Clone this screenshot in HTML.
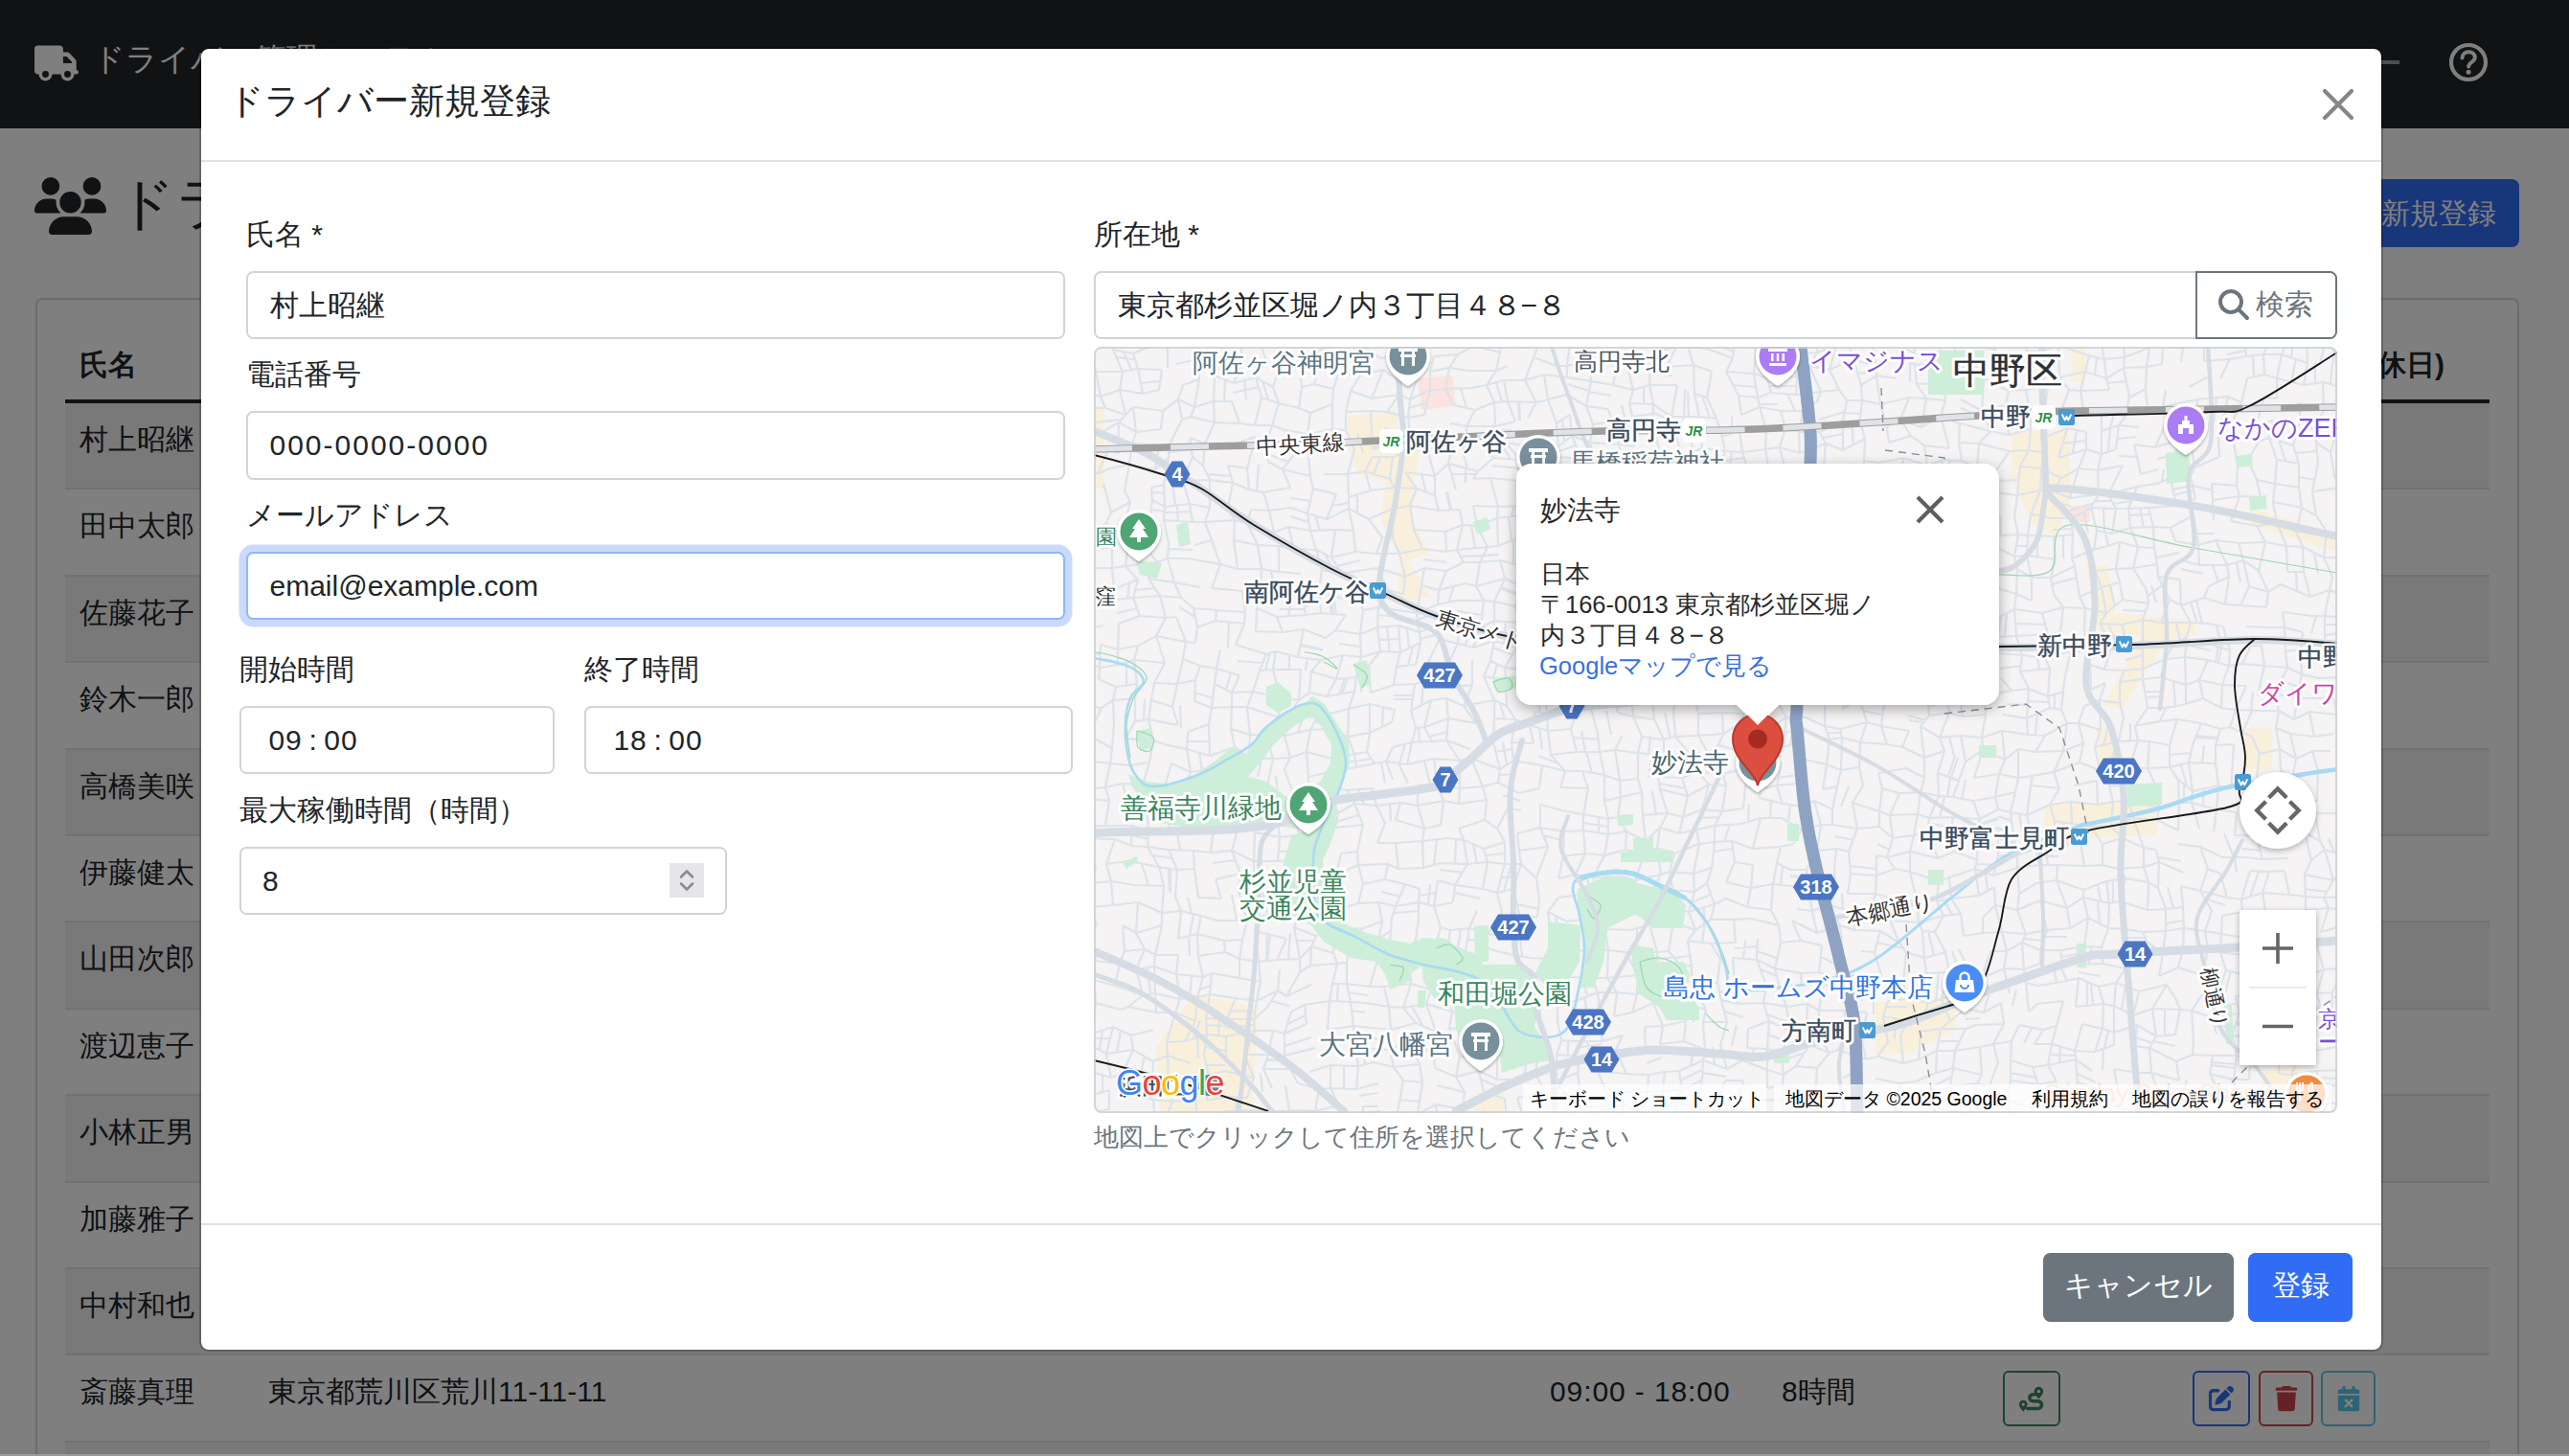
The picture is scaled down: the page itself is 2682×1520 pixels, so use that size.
<!DOCTYPE html>
<html lang="ja"><head><meta charset="utf-8"><title>ドライバー管理</title>
<style>
html{font-size:calc(100vw / 26.82)}
*{box-sizing:border-box}
html,body{margin:0;padding:0;background:#808080;overflow:hidden}
body{font-family:"Liberation Sans",sans-serif;color:#212529;font-size:.3rem;line-height:.45rem}
#page{position:relative;width:26.82rem;height:15.2rem;overflow:hidden;background:#fff}
.abs{position:absolute}
.t{position:absolute;white-space:nowrap;line-height:.45rem;font-size:.3rem}
/* ---------- underlying page ---------- */
#nav{position:absolute;left:0;top:0;width:26.82rem;height:1.34rem;background:#212529}
#brand{left:.97rem;top:.39rem;font-size:.33rem;color:#fff;line-height:.46rem}
#h2{left:1.22rem;top:1.68rem;font-size:.6rem;line-height:.9rem;font-weight:500}
#newbtn{position:absolute;left:23.8rem;top:1.87rem;width:2.5rem;height:.71rem;background:#316cf4;border-radius:.075rem;color:#fff}
#newbtn span{position:absolute;left:1.06rem;top:.13rem;line-height:.45rem;font-size:.3rem;white-space:nowrap}
#card{position:absolute;left:.37rem;top:3.11rem;width:25.93rem;height:13rem;border:.02rem solid rgba(0,0,0,.15);border-radius:.075rem;background:#fff}
#thead{position:absolute;left:.68rem;top:3.43rem;width:25.31rem;height:.78rem;border-bottom:.04rem solid #212529;font-weight:bold}
.row{position:absolute;left:.68rem;width:25.31rem;height:.904rem;border-bottom:.02rem solid #dee2e6}
.row.s{background:rgba(0,0,0,.05)}
.row .t{top:.15rem}
.bt{position:absolute;top:.16rem;height:.576rem;border:.02rem solid;border-radius:.06rem}
.bt svg{position:absolute;left:50%;top:50%;transform:translate(-50%,-50%)}
#ov{position:absolute;left:0;top:0;width:26.82rem;height:15.2rem;background:rgba(0,0,0,.5)}
/* ---------- modal ---------- */
#modal{position:absolute;left:2.08rem;top:.49rem;width:22.8rem;height:13.62rem;background:#fff;border:.02rem solid rgba(0,0,0,.2);border-radius:.1rem;background-clip:padding-box}
#mh{position:absolute;left:2.1rem;top:.5rem;width:22.76rem;height:1.19rem;border-bottom:.02rem solid #dee2e6}
#mtitle{left:2.38rem;top:.78rem;font-size:.368rem;line-height:.56rem;font-weight:500}
#mf{position:absolute;left:2.1rem;top:12.77rem;width:22.76rem;height:.02rem;background:#dee2e6}
.lbl{position:absolute;white-space:nowrap;font-size:.3rem;line-height:.45rem}
.in{position:absolute;height:.715rem;border:.02rem solid #cfd4da;border-radius:.075rem;background:#fff;font-size:.3rem;line-height:.45rem;padding:.1125rem .225rem;white-space:nowrap;overflow:hidden}
.in.f{border-color:#90b6f8;box-shadow:0 0 0 .075rem rgba(49,108,244,.25)}
.btn{position:absolute;height:.715rem;border-radius:.075rem;color:#fff;font-size:.3rem;line-height:.45rem;padding:.1125rem 0;text-align:center;white-space:nowrap}
#help{left:11.42rem;top:11.68rem;font-size:.257rem;line-height:.39rem;color:#6c757d}
#map{position:absolute;left:11.42rem;top:3.62rem;width:12.98rem;height:8rem;border-radius:.08rem;overflow:hidden;background:#f5f3f3;border:0}
#map svg{position:absolute;left:0;top:0}
#mapborder{position:absolute;left:11.42rem;top:3.62rem;width:12.98rem;height:8rem;border-radius:.08rem;border:.02rem solid rgba(205,208,212,.85);pointer-events:none}
</style></head>
<body>
<div id="page">
<div id="nav"><svg class="abs" style="width:0.46rem;height:0.38rem;left:.36rem;top:.47rem" viewBox="0 0 640 512"><path fill="#fff" d="M48 0C21.5 0 0 21.5 0 48V368c0 26.500 21.500 48 48 48H64c0 53 43 96 96 96s96-43 96-96H384c0 53 43 96 96 96s96-43 96-96h32c17.700 0 32-14.300 32-32s-14.300-32-32-32V288 256 237.300c0-17-6.700-33.300-18.700-45.300L512 114.700c-12-12-28.300-18.700-45.300-18.700H416V48c0-26.500-21.500-48-48-48H48zM416 160h50.700L544 237.300V256H416V160zM112 416a48 48 0 1 1 96 0 48 48 0 1 1 -96 0zm368-48a48 48 0 1 1 0 96 48 48 0 1 1 0-96z"/></svg><div class="t" id="brand">ドライバー管理システム</div><div class="abs" style="left:24.6rem;top:.63rem;width:.45rem;height:.04rem;background:rgba(255,255,255,.55)"></div><svg class="abs" style="width:0.44rem;height:0.44rem;left:25.55rem;top:.43rem" viewBox="0 0 44 44"><circle cx="22" cy="22" r="18" fill="none" stroke="#fff" stroke-width="4.200"/><path d="M15.500 17.500c0-3.800 3-6.300 6.700-6.300s6.600 2.400 6.600 5.800c0 4.500-6.600 5-6.600 9.500" fill="none" stroke="#fff" stroke-width="4" stroke-linecap="round" stroke-linejoin="round"/><circle cx="22.100" cy="32.300" r="2.500" fill="#fff"/></svg></div>
<svg class="abs" style="width:0.75rem;height:0.6rem;left:.36rem;top:1.85rem" viewBox="0 0 640 512"><path fill="#212529" d="M144 0a80 80 0 1 1 0 160A80 80 0 1 1 144 0zM512 0a80 80 0 1 1 0 160A80 80 0 1 1 512 0zM0 298.700C0 239.800 47.800 192 106.700 192h42.700c15.900 0 31 3.500 44.600 9.700c-1.300 7.200-1.900 14.700-1.900 22.300c0 38.200 16.800 72.500 43.300 96c-.2 0-.4 0-.7 0H21.300C9.600 320 0 310.400 0 298.700zM405.300 320c-.2 0-.4 0-.7 0c26.600-23.500 43.300-57.800 43.300-96c0-7.600-.7-15-1.900-22.300c13.600-6.300 28.700-9.700 44.600-9.700h42.700C592.200 192 640 239.800 640 298.700c0 11.800-9.600 21.300-21.300 21.300H405.300zM224 224a96 96 0 1 1 192 0 96 96 0 1 1 -192 0zM128 485.300C128 411.700 187.700 352 261.300 352H378.700C452.300 352 512 411.700 512 485.300c0 14.700-11.900 26.700-26.700 26.700H154.700c-14.700 0-26.700-11.900-26.700-26.700z"/></svg>
<div class="t" id="h2">ドライバー管理</div>
<div id="newbtn"><span>新規登録</span></div>
<div id="card"></div>
<div id="thead"><div class="t" style="left:.15rem;top:.15rem">氏名</div><div class="t" style="right:.47rem;top:.15rem">稼働日(平日/休日)</div></div>
<div class="row s" style="top:4.21rem"><div class="t" style="left:.15rem">村上昭継</div></div>
<div class="row" style="top:5.114rem"><div class="t" style="left:.15rem">田中太郎</div></div>
<div class="row s" style="top:6.018rem"><div class="t" style="left:.15rem">佐藤花子</div></div>
<div class="row" style="top:6.922rem"><div class="t" style="left:.15rem">鈴木一郎</div></div>
<div class="row s" style="top:7.826rem"><div class="t" style="left:.15rem">高橋美咲</div></div>
<div class="row" style="top:8.73rem"><div class="t" style="left:.15rem">伊藤健太</div></div>
<div class="row s" style="top:9.634rem"><div class="t" style="left:.15rem">山田次郎</div></div>
<div class="row" style="top:10.538rem"><div class="t" style="left:.15rem">渡辺恵子</div></div>
<div class="row s" style="top:11.442rem"><div class="t" style="left:.15rem">小林正男</div></div>
<div class="row" style="top:12.346rem"><div class="t" style="left:.15rem">加藤雅子</div></div>
<div class="row s" style="top:13.25rem"><div class="t" style="left:.15rem">中村和也</div></div>
<div class="row" style="top:14.154rem"><div class="t" style="left:.15rem">斎藤真理</div><div class="t" style="left:2.12rem">東京都荒川区荒川11-11-11</div><div class="t" style="left:15.5rem;letter-spacing:.009rem">09:00 - 18:00</div><div class="t" style="left:17.92rem">8時間</div><div class="bt" style="left:20.23rem;width:.6rem;border-color:#408558"><svg style="width:0.28rem;height:0.28rem" viewBox="0 0 32 32"><g fill="none" stroke="#408558" stroke-width="4" stroke-linecap="round"><path d="M11 28h12.500a4.500 4.500 0 0 0 0-9h-6a4 4 0 0 1 0-8H20"/></g><path fill="#408558" d="M24.500 2a5.500 5.500 0 0 1 5.500 5.500c0 3.500-5.500 9-5.500 9s-5.500-5.500-5.500-9A5.500 5.500 0 0 1 24.500 2zm0 3.500a2 2 0 1 0 0 4 2 2 0 0 0 0-4zM6 18a5 5 0 0 1 5 5c0 3.200-5 8.500-5 8.500S1 26.200 1 23a5 5 0 0 1 5-5zm0 3.200a1.800 1.800 0 1 0 0 3.600 1.800 1.800 0 0 0 0-3.600z"/></svg></div><div class="bt" style="left:22.21rem;width:.6rem;border-color:#316cf4"><svg style="width:0.265rem;height:0.265rem" viewBox="0 0 512 512"><path fill="#316cf4" d="M471.600 21.700c-21.900-21.900-57.300-21.900-79.200 0L362.300 51.700l97.900 97.900 30.100-30.100c21.900-21.900 21.900-57.300 0-79.200L471.600 21.700zm-299.200 220c-6.100 6.100-10.800 13.600-13.500 21.900l-29.600 88.800c-2.900 8.600-.6 18.100 5.800 24.600s15.900 8.700 24.600 5.800l88.800-29.600c8.200-2.700 15.700-7.400 21.900-13.500L437.700 172.300 339.700 74.300 172.400 241.700zM96 64C43 64 0 107 0 160V416c0 53 43 96 96 96H352c53 0 96-43 96-96V320c0-17.700-14.300-32-32-32s-32 14.300-32 32v96c0 17.700-14.300 32-32 32H96c-17.700 0-32-14.300-32-32V160c0-17.700 14.300-32 32-32h96c17.700 0 32-14.300 32-32s-14.300-32-32-32H96z"/></svg></div><div class="bt" style="left:22.9rem;width:.57rem;border-color:#cb444a"><svg style="width:0.23rem;height:0.265rem" viewBox="0 0 448 512"><path fill="#cb444a" d="M135.200 17.700L128 32H32C14.300 32 0 46.300 0 64S14.300 96 32 96H416c17.700 0 32-14.300 32-32s-14.300-32-32-32H320l-7.200-14.300C307.400 6.800 296.300 0 284.200 0H163.800c-12.100 0-23.200 6.800-28.600 17.700zM416 128H32L53.200 467c1.600 25.300 22.600 45 47.900 45H346.900c25.300 0 46.300-19.700 47.900-45L416 128z"/></svg></div><div class="bt" style="left:23.55rem;width:.57rem;border-color:#5cc7ec"><svg style="width:0.23rem;height:0.265rem" viewBox="0 0 448 512"><path fill="#5cc7ec" d="M128 0c17.700 0 32 14.300 32 32V64H288V32c0-17.700 14.300-32 32-32s32 14.300 32 32V64h48c26.500 0 48 21.500 48 48v48H0V112C0 85.500 21.500 64 48 64H96V32c0-17.700 14.300-32 32-32zM0 192H448V464c0 26.500-21.500 48-48 48H48c-26.500 0-48-21.500-48-48V192zM305 305c9.400-9.400 9.400-24.600 0-33.900s-24.600-9.400-33.900 0l-47 47-47-47c-9.400-9.400-24.600-9.400-33.900 0s-9.400 24.600 0 33.900l47 47-47 47c-9.400 9.400-9.400 24.600 0 33.900s24.600 9.400 33.900 0l47-47 47 47c9.400 9.400 24.600 9.400 33.900 0s9.400-24.600 0-33.900l-47-47 47-47z"/></svg></div></div>
<div class="row s" style="top:15.058rem"><div class="t" style="left:.15rem">木村拓也</div></div>
<div id="ov"></div>
<div id="bstrip" class="abs" style="left:0;top:15.18rem;width:26.82rem;height:.02rem;background:#9a9a9a"></div>
<div id="modal"></div>
<div id="mh"></div>
<div class="t" id="mtitle">ドライバー新規登録</div>
<svg class="abs" style="width:0.4rem;height:0.4rem;left:24.21rem;top:.89rem" viewBox="0 0 40 40"><path d="M6 6L34 34M34 6L6 34" stroke="#858585" stroke-width="4.200" stroke-linecap="round" fill="none"/></svg>
<div class="lbl" style="left:2.57rem;top:2.215rem">氏名 *</div>
<div class="in" style="left:2.57rem;top:2.825rem;width:8.55rem">村上昭継</div>
<div class="lbl" style="left:2.57rem;top:3.68rem">電話番号</div>
<div class="in" style="left:2.57rem;top:4.29rem;width:8.55rem;letter-spacing:.02rem">000-0000-0000</div>
<div class="lbl" style="left:2.57rem;top:5.145rem">メールアドレス</div>
<div class="in f" style="left:2.57rem;top:5.755rem;width:8.55rem">email@example.com</div>
<div class="lbl" style="left:2.495rem;top:6.76rem">開始時間</div>
<div class="lbl" style="left:6.095rem;top:6.76rem">終了時間</div>
<div class="in" style="left:2.495rem;top:7.365rem;width:3.29rem;padding-left:.29rem;word-spacing:-.025rem;letter-spacing:.009rem">09 : 00</div>
<div class="in" style="left:6.095rem;top:7.365rem;width:5.1rem;padding-left:.29rem;word-spacing:-.025rem;letter-spacing:.009rem">18 : 00</div>
<div class="lbl" style="left:2.495rem;top:8.225rem">最大稼働時間（時間）</div>
<div class="in" style="left:2.495rem;top:8.835rem;width:5.09rem">8</div>
<div class="abs" style="left:6.99rem;top:9.01rem;width:.36rem;height:.36rem;background:#e6e5ea"></div><svg class="abs" style="width:0.36rem;height:0.36rem;left:6.99rem;top:9.01rem" viewBox="0 0 36 36"><path d="M12 14.500l6-6 6 6M12 21.500l6 6 6-6" fill="none" stroke="#8c8a94" stroke-width="2.600" stroke-linecap="round" stroke-linejoin="round"/></svg>
<div class="lbl" style="left:11.42rem;top:2.215rem">所在地 *</div>
<div class="in" style="left:11.42rem;top:2.825rem;width:11.52rem;border-radius:.075rem 0 0 .075rem">東京都杉並区堀ノ内３丁目４８−８</div>
<div class="abs" style="left:22.92rem;top:2.825rem;width:1.48rem;height:.715rem;border:.02rem solid #6e757c;border-radius:0 .075rem .075rem 0;background:#fff"></div>
<svg class="abs" style="width:0.32rem;height:0.32rem;left:23.16rem;top:3.02rem" viewBox="0 0 512 512"><path fill="#6c757d" d="M416 208c0 45.900-14.900 88.300-40 122.700L502.600 457.400c12.500 12.500 12.500 32.800 0 45.300s-32.800 12.500-45.300 0L330.700 376c-34.400 25.200-76.800 40-122.700 40C93.100 416 0 322.900 0 208S93.100 0 208 0S416 93.100 416 208zM208 352a144 144 0 1 0 0-288 144 144 0 1 0 0 288z"/></svg>
<div class="t" style="left:23.55rem;top:2.95rem;color:#6e757c">検索</div>
<div id="map"><svg style="width:12.98rem;height:8rem" viewBox="1142 362 1298 800" font-family="'Liberation Sans',sans-serif"><defs><filter id="ps" x="-30%" y="-30%" width="160%" height="170%"><feDropShadow dx="0" dy="2" stdDeviation="1.500" flood-color="#000" flood-opacity=".3"/></filter><filter id="cs" x="-30%" y="-30%" width="160%" height="160%"><feDropShadow dx="0" dy="2" stdDeviation="3" flood-color="#000" flood-opacity=".3"/></filter><filter id="iw" x="-10%" y="-10%" width="120%" height="130%"><feDropShadow dx="0" dy="4" stdDeviation="7" flood-color="#000" flood-opacity=".32"/></filter></defs><rect x="1142" y="362" width="1298" height="800" fill="#f5f3f3"/><path d="M1407 435L1459 429 1459 455 1476 455 1482 478 1476 502 1473 542 1493 579 1470 585 1493 623 1459 628 1462 585 1441 542 1447 502 1418 496 1407 467Z" fill="#f9f0dc"/><path d="M1142 424L1153 424 1153 510 1142 510Z" fill="#f9f0dc"/><path d="M2163 362L2177 362 2177 398 2163 398Z" fill="#f9f0dc"/><path d="M2100 452L2160 448 2162 520 2146 560 2120 545 2100 500Z" fill="#f9f0dc"/><path d="M2348 530L2440 558 2440 576 2348 548Z" fill="#f9f0dc"/><path d="M2178 590L2200 590 2212 660 2190 662Z" fill="#f9f0dc"/><path d="M2210 640L2292 648 2292 662 2262 668 2215 740 2196 736 2236 664 2210 660Z" fill="#f9f0dc"/><path d="M2134 840L2250 835 2252 872 2134 876Z" fill="#f9f0dc"/><path d="M2344 760L2372 760 2372 803 2344 803Z" fill="#f9f0dc"/><path d="M2188 760L2208 760 2212 800 2192 800Z" fill="#f9f0dc"/><path d="M1958 1047L2041 1040 2041 1075 1990 1100 1958 1100Z" fill="#f9f0dc"/><path d="M1207 1093L1245 1038 1314 1052 1307 1160 1211 1160Z" fill="#f9f0dc"/><path d="M1540 1140L1570 1140 1570 1160 1540 1160Z" fill="#f9f0dc"/><path d="M2360 1120L2400 1110 2410 1150 2370 1160Z" fill="#f9f0dc"/><path d="M1480 395L1516 392 1520 424 1484 428Z" fill="#fbe3df"/><path d="M2160 528L2182 528 2182 545 2160 545Z" fill="#fbe3df"/><path d="M1119 343L1145 342L1165 344L1181 344L1202 341L1225 334L1251 341L1269 331L1297 340L1317 333L1344 329L1364 334L1375 334M1398 346L1418 345L1444 345L1464 342L1478 344L1506 347L1522 347M1544 341L1569 344L1582 340L1605 342L1628 332L1651 329L1664 337L1681 335M1700 339L1729 340M1751 339L1769 345L1788 346L1812 353L1828 350L1843 350L1872 353L1895 341M1911 344L1927 338L1951 332L1971 338L1993 331L2018 339L2036 334L2064 342L2089 344L2104 341L2127 349L2157 342L2168 344L2191 348L2217 344M2232 345M2258 345L2287 344L2303 340L2327 331L2351 339L2372 338L2387 333L2404 337M2424 331L2447 335M1122 363L1139 364M1162 365L1183 369L1212 357L1229 357L1252 352L1279 362M1296 355L1312 350L1336 353M1363 354L1373 367L1400 359L1421 360L1441 374L1466 371M1478 367M1497 372L1522 370L1539 361L1566 368M1586 363L1606 360L1619 356L1640 349L1656 352L1680 359L1709 358M1730 367L1750 362L1762 362L1782 364L1809 374M1833 369M1851 372L1865 369L1897 368L1917 361L1931 363M1955 361L1985 354L1999 361L2025 351L2039 352L2071 363L2083 365M2116 366L2130 367L2149 361L2181 371L2197 375L2218 373L2244 363M2258 362L2279 363L2301 358L2320 362L2344 355L2368 360L2386 361L2408 357L2429 352M2448 357M1120 394L1144 388L1172 388L1188 385L1213 386M1228 380L1251 375M1278 376M1296 379M1322 376M1338 378L1357 383L1377 383L1397 391L1420 392L1444 386L1459 396L1483 385M1493 388L1513 384L1533 387L1562 387L1574 382M1601 373L1625 382L1636 382L1659 376L1688 382L1698 379L1723 381M1740 383L1768 381L1787 388M1802 388L1831 390L1845 395L1876 393L1889 382L1910 386L1935 375L1959 383L1986 373L1999 381L2026 379M2042 372L2072 379L2085 388L2114 389L2129 392L2150 394L2177 388L2199 395L2217 384L2241 383L2257 380M2277 378M2301 377L2328 375L2345 372L2363 370L2382 370L2409 379M2422 380M2452 378M1132 410L1149 414L1169 407L1193 411L1210 407M1235 402L1252 396M1268 392L1288 400L1311 394L1329 404M1359 404L1372 401L1392 406M1410 408L1432 416L1461 412L1472 417L1493 407L1509 406L1536 405L1552 402L1570 397L1592 397L1612 391L1636 394L1661 398L1684 402L1705 407L1722 402L1751 402M1769 411L1782 415M1815 413L1835 415L1849 410L1875 412L1901 409L1920 407M1943 402L1959 392L1980 395M2001 401L2029 400L2052 402L2071 395L2097 408L2115 407L2138 403M2160 407L2172 408L2202 407M2223 415L2240 406M2261 407M2285 404L2304 394M2318 395M2346 395L2364 391L2377 395L2405 402L2425 399L2443 404M1127 426L1154 426L1175 433L1183 425L1214 429L1230 417L1247 425L1267 419L1286 419M1317 415L1335 421L1356 426L1368 431L1391 422M1405 430L1431 429L1448 430L1470 436L1487 433M1518 423L1540 428L1560 420L1574 419L1604 420L1616 417L1636 412L1656 424L1679 427M1701 421L1726 422L1745 435L1774 435L1792 437M1818 433L1837 425L1859 429L1882 429L1897 419M1928 418L1944 418L1963 422L1993 415L2011 416L2031 418M2047 417L2069 429L2094 423L2120 435L2135 426M2153 426L2175 427L2194 428L2219 435M2242 426L2258 425L2278 420L2294 417L2326 414L2340 420M2364 415L2377 416M2399 421L2426 428L2445 420M1120 455L1152 450L1168 441L1186 451L1212 448M1234 438L1243 435L1268 441L1294 442L1310 444L1328 444L1342 449L1365 453L1391 448L1405 449M1432 455M1445 447L1472 453L1491 447M1514 442L1531 445L1561 445L1582 440M1595 436M1625 442L1639 433M1663 443L1683 440L1708 451L1725 442L1748 449L1774 448M1798 456L1816 449M1844 449M1864 447L1878 451L1900 451L1924 439M1942 440L1970 445L1984 438L2006 446L2026 435L2046 442L2078 450L2097 454L2120 448M2131 458L2158 447L2178 451M2194 450L2212 444L2233 446M2262 440L2282 439L2294 445M2321 439L2331 439M2355 445L2373 439M2402 437L2416 450L2442 442M1118 467L1150 467L1167 473L1182 463L1210 465L1221 464M1242 457L1258 463M1290 463L1311 456M1322 464L1352 473L1365 466L1386 472M1414 469M1433 477L1454 477L1473 470L1490 469L1517 463L1531 469M1553 458L1572 462L1598 466L1627 466L1641 455L1660 462L1690 464L1706 466M1733 472L1756 476L1777 468L1801 471L1819 472L1843 469L1858 467L1879 473L1906 463L1924 470L1947 458M1972 462L1995 455L2009 465L2035 468M2045 462L2066 463L2098 471L2118 470L2137 473M2149 478L2178 469L2194 474L2209 469M2228 464L2250 467L2275 459L2287 459M2316 456L2331 456L2358 461L2369 457L2394 465M2418 462L2433 472M1120 490L1139 497L1159 489L1179 485L1206 490L1220 478M1245 477L1256 486M1282 486L1302 489M1324 482L1339 490L1368 497M1382 495L1407 495L1425 492L1451 500M1467 493L1498 497L1512 484L1543 492L1559 478L1587 480L1608 483L1629 477L1651 479L1667 489L1695 482L1709 488L1734 490L1751 490M1780 500M1793 496L1824 488L1846 488M1864 491L1886 486L1904 487L1925 486M1946 481L1961 483L1988 478L2012 486L2028 480L2048 481L2064 488L2084 491M2109 487L2131 489L2152 499L2170 489L2190 491L2216 486M2235 495L2253 490M2267 490L2291 488L2317 477M2336 487L2347 480M2377 480L2400 484M2420 484M2437 497M1114 510L1138 509M1152 505M1174 512M1202 509L1215 506M1235 502L1263 501L1287 504L1304 511L1319 514L1347 509M1371 510L1395 516M1408 519L1431 512L1456 509L1479 510L1498 517M1520 511M1538 500L1556 499L1586 502L1606 507L1623 499L1652 497M1665 504L1688 506L1711 512L1737 509L1759 515L1774 522L1797 511M1816 517L1847 517L1861 508L1877 510M1905 504L1926 503L1950 506L1962 507L1979 503L2004 500L2020 509L2039 509L2072 506L2082 514L2106 517L2130 512L2144 513L2161 520L2191 516M2201 516L2231 508L2252 505L2266 499L2287 497M2309 505L2335 507M2356 501L2375 505L2400 509M2414 513L2445 509M1120 528L1133 528M1160 535L1180 524M1203 522L1216 529L1242 526L1263 530M1282 530M1306 532L1325 533L1348 530L1365 536L1385 542L1408 531L1429 542L1454 531L1472 528L1502 533L1524 532M1538 528L1564 529L1591 528L1603 528L1636 529L1647 521L1668 521L1699 534L1718 537L1739 532L1753 531L1782 533L1797 536L1814 532L1838 537L1859 529L1888 529L1906 528L1916 523L1941 527L1960 526L1983 520M2007 520M2027 523L2036 526M2066 539L2077 535M2103 540M2120 537L2142 541L2162 541L2183 530L2209 531L2222 531L2243 530L2272 528L2292 521M2310 522L2338 518L2360 519M2373 524L2403 530L2418 538M2438 534M1115 557L1138 554L1154 547L1173 551M1200 548M1215 543L1245 545L1258 545L1289 543L1302 546L1330 556L1345 550L1368 554L1394 553L1413 554M1443 561L1454 562M1476 553L1509 555L1527 548L1542 549L1563 541L1588 538M1609 548L1634 545L1655 546L1669 550M1694 555L1721 553L1737 559L1756 554L1780 563L1801 560L1823 558L1840 553L1856 553L1873 548L1902 550L1921 542M1938 544L1961 543L1982 551L1995 549L2023 548L2040 558L2054 555L2077 560L2107 558L2117 559L2144 560L2164 558M2189 554L2205 557L2224 551L2248 550L2266 551L2290 538M2311 543M2329 544L2356 549L2377 546L2397 555L2429 555L2441 560M1113 571L1131 576L1161 571M1178 568L1196 572M1220 567M1247 569L1265 564M1288 564L1313 569L1335 570L1351 573L1374 574L1390 582L1415 576L1437 578L1461 578L1485 573L1510 576L1521 574L1553 571L1564 570L1592 559L1605 571L1634 563M1647 564L1670 574M1692 569M1719 580M1730 583L1756 582L1777 584L1799 583L1811 579L1836 578L1855 577L1876 566M1892 562L1916 560L1936 560L1956 565M1977 571L1991 573L2017 572L2041 578L2058 575M2086 572L2103 581L2116 580L2146 584M2163 583L2186 574L2213 566L2232 571L2249 572M2271 565L2295 569L2313 564L2337 567L2365 566L2387 570L2404 571L2426 582L2450 582M1113 592L1135 593L1161 593L1175 591L1208 587L1219 583L1240 583L1274 589L1292 594L1317 594L1335 597L1358 599M1380 595L1401 599L1424 595L1438 593L1467 602L1487 593L1510 596L1528 587L1545 587L1566 585L1591 592M1604 587L1625 583L1655 591M1677 592L1685 594M1713 603L1738 599L1751 595L1774 596L1788 593L1806 599L1827 601L1847 597L1868 583L1896 584L1916 582L1928 590L1957 591L1978 583L1998 593L2016 598L2035 601L2062 591L2074 601M2106 594L2121 603L2141 603L2166 591M2187 596L2209 594L2227 593L2252 589M2278 585L2296 590L2325 590L2342 585L2358 596M2388 597L2405 597M2435 602M2451 597M1117 620L1138 615L1163 615L1188 605M1199 604L1226 608L1253 613M1265 614L1297 617L1316 611M1341 621L1360 624L1377 615L1401 625M1418 624L1449 616L1465 620M1484 611L1502 616L1530 609L1541 612L1571 604L1589 612L1613 608L1628 611L1644 608L1664 617L1687 618L1707 619L1724 615L1755 619L1764 622L1793 615L1811 615M1830 609L1844 619L1876 610L1892 605L1916 606L1939 611M1958 614L1972 604L1992 608L2012 609M2040 622L2060 625L2088 615L2105 620L2121 627M2144 620M2171 623L2194 613L2213 608M2241 616M2253 602L2276 605M2306 612L2327 602M2348 612L2368 618L2381 610L2412 623L2432 616L2452 624M1116 633M1140 628L1165 626L1183 624L1211 622L1233 624L1246 635L1270 637L1300 639M1312 635L1333 644L1363 642L1379 640L1405 642M1423 637L1439 634L1466 638L1479 640L1501 631L1520 627L1549 627L1560 628L1582 633L1600 636L1619 636L1647 630L1665 633L1682 635M1704 647L1732 647L1741 639M1772 636L1790 637L1814 631L1832 633L1844 626L1874 631L1887 628L1918 624M1934 624L1951 633L1979 627L1992 628L2021 636L2038 635L2065 643L2089 643L2103 636L2132 640L2154 634L2177 635L2199 640L2216 626L2243 630M2265 626L2277 632L2301 624L2323 631L2339 632L2366 634M2383 639L2413 643L2427 643L2449 645M1118 660L1152 653M1168 651L1190 643L1217 645L1228 644M1250 655L1269 648L1299 651M1311 659L1339 660L1361 657L1384 666L1394 658L1420 662L1438 655L1460 653L1482 660L1497 654M1525 646M1546 655L1560 648L1586 650L1600 657L1626 651L1639 653L1662 664L1687 666M1707 666L1718 663L1750 669L1762 661L1788 658L1807 652L1827 655L1843 648L1877 654L1898 651L1918 654M1940 643M1959 648M1981 650L2001 661L2024 655L2045 659L2072 659L2086 665L2105 664L2138 662L2151 660M2176 653M2192 651L2216 652L2237 647L2256 650L2287 650L2305 651L2321 654M2345 654L2368 655L2385 655L2404 660M2427 663L2443 661M1131 672M1149 673L1167 678L1188 674L1207 664L1238 670L1248 671M1274 678M1290 673L1322 683L1332 680L1355 686L1379 689L1402 684L1421 686L1441 680L1462 681L1483 671M1503 667L1522 672L1538 676L1560 669L1583 676M1601 671L1619 674L1643 674L1659 680M1680 679L1706 688L1723 683L1740 681L1761 683L1788 675L1813 676L1834 680L1857 669L1872 677L1888 664L1917 670L1943 674L1960 679L1982 675L2006 676L2024 681M2045 688L2072 684M2086 682L2111 684L2135 687L2162 680L2177 680M2205 674L2220 677L2237 669L2268 674L2283 665M2309 673L2328 679M2350 674L2361 674M2386 680L2402 678L2428 685L2444 690M1130 690L1148 697L1167 694L1184 689L1216 692M1235 688L1253 695L1270 698L1294 705M1315 700L1329 699L1358 699M1369 701L1395 709L1416 707L1429 695M1458 696L1478 694M1491 691L1510 697M1537 689M1556 690L1571 697L1599 700L1617 698L1636 693L1666 706L1679 709L1706 702L1725 711L1745 710L1763 702L1791 697L1807 703M1831 700L1850 689L1874 688M1903 688L1920 686L1942 691M1962 688L1980 701L2005 696M2024 699L2047 697L2074 703M2089 708M2109 701L2140 698M2156 705M2182 694L2197 699L2218 700L2237 698L2261 688L2281 686L2305 689L2327 695L2341 693L2364 695L2388 697L2403 704L2420 708L2442 707M1129 714M1147 709L1165 717L1187 714M1205 713L1229 714L1248 710M1268 714L1286 723L1308 722L1336 728L1356 731L1367 723L1385 727L1414 722M1431 723L1455 715L1477 714L1495 710M1509 718L1537 715M1549 706L1572 710M1594 714M1612 716L1641 716M1665 724L1685 722M1703 728L1724 719L1752 729M1766 717M1795 723L1807 715L1830 720L1853 719L1882 707L1903 711L1925 717L1941 708L1971 715L1993 721M2012 725L2032 722L2046 727M2072 726L2100 721L2118 719L2138 727L2154 722M2183 720L2198 713M2213 712L2237 709L2256 707L2282 715L2296 710L2320 715L2345 716M2357 726L2375 724L2398 729L2421 729L2436 728M1128 736L1150 739L1162 731L1185 729M1202 731L1224 738M1247 732L1265 739L1286 738L1302 738L1335 749L1343 750L1375 748M1384 746L1408 740L1430 735L1456 741M1473 742L1494 731L1510 729L1528 737L1560 731L1573 737M1603 743L1615 744L1645 746M1661 740M1689 744L1705 748L1727 751M1747 740M1773 745L1798 744L1821 745L1838 736M1855 732L1882 728L1905 729M1924 740L1941 729M1967 733L1992 733M2014 747L2035 744L2049 748L2073 746M2091 746L2116 750L2140 739L2152 741M2176 737L2192 731L2213 734M2242 739L2261 739L2282 735L2300 729L2319 739L2334 741L2362 742L2379 742L2395 751L2411 743L2440 746M1118 759L1142 756M1163 755M1185 753L1199 751L1230 757M1240 764L1262 756M1285 761L1305 767L1322 768L1341 768L1368 762L1386 761L1407 769L1430 765L1453 754M1478 760L1487 759L1512 750L1541 755M1560 750L1582 751L1597 757L1616 763L1640 761M1668 765M1693 769M1714 769L1737 772L1749 769L1773 768L1799 766L1814 757L1843 763L1865 749L1885 749L1905 758L1921 761L1949 754L1964 758L1993 763M2005 758L2025 770L2047 768L2069 770L2090 763L2117 767L2135 768L2158 755L2170 755L2193 762M2217 749M2229 758L2255 753L2273 751L2298 755L2318 761L2328 759L2351 769M2376 760L2391 766L2416 769L2436 766M1114 778L1139 769L1161 781M1175 771L1204 773L1219 778L1239 782L1263 789L1289 780L1304 791L1329 792L1347 791L1364 785L1391 792L1414 787L1427 785M1454 780L1474 775L1495 774L1510 773L1535 782M1559 775M1578 775L1601 776M1619 788L1646 785L1670 785L1686 783L1710 786L1737 789L1762 785M1783 786L1794 778L1822 786L1840 781L1862 780L1878 775M1910 772L1923 770L1942 775L1970 777L1986 780L2009 791L2030 784M2052 795L2070 783L2093 793L2107 782L2125 785L2154 784L2175 776M2187 780L2212 774L2232 773L2244 774L2265 778M2289 778M2313 778L2332 777M2359 787L2380 782L2397 792L2414 784L2433 784M1121 792L1142 795L1159 797L1179 799L1200 796M1223 797L1243 806L1265 803L1286 814M1302 806M1324 816M1341 803M1366 811L1392 805L1416 801L1435 797L1447 795L1469 798L1497 792L1524 794L1536 792L1566 803L1580 794L1610 799L1634 805L1652 805L1675 809L1691 815L1710 813M1731 811L1756 812L1773 806L1799 808L1827 801L1838 794M1860 796M1880 792L1907 798L1922 804L1941 801M1961 807L1990 802L2009 812M2023 807L2045 815M2061 812L2087 808L2107 812L2122 810L2144 806L2171 796L2192 804L2205 790L2223 802L2242 802L2265 801L2285 796L2313 797M2330 811M2356 812M2381 803L2393 814L2420 804L2439 805M1115 813L1130 824L1154 822L1172 818L1193 819L1215 824L1235 827M1261 822L1281 829L1309 828L1322 837M1352 834L1366 825L1387 822L1406 825L1433 823M1454 814M1480 820L1500 818L1524 823L1548 821L1564 817L1586 828L1607 823M1629 822L1658 823M1675 836L1692 832L1714 827M1733 824L1762 831L1784 819L1802 820M1822 821L1838 824L1855 820L1886 817M1903 824L1918 821M1945 820M1965 823L1983 828L2005 827L2024 831L2039 832L2060 836L2083 832L2104 827M2120 820L2150 823M2165 820L2189 815M2202 821L2226 819L2252 823M2274 814L2289 826L2316 820L2329 824M2350 827L2380 831L2398 826L2419 837M2444 829M1114 843L1138 834L1158 836M1177 836M1197 839L1218 837M1237 847L1257 844L1287 847L1304 848L1332 847L1351 856M1368 849L1397 849L1414 839L1437 841L1462 838L1480 841L1507 836L1523 839L1552 835M1574 844L1588 846M1608 840L1635 847L1653 850L1679 855L1689 853M1715 851L1741 849L1757 853L1777 845L1798 847L1820 844M1837 833L1861 839L1882 842L1894 836L1913 845M1934 838L1962 847L1973 851L2002 850L2014 854L2039 853L2067 855L2086 845L2099 848L2116 851L2140 840L2162 837L2190 840L2206 837L2222 836L2254 843L2275 838L2288 838L2314 845L2335 848M2358 849M2383 848L2407 853M2417 849L2445 849M1115 857L1133 863L1154 862L1182 862L1199 868L1221 870M1238 867L1267 864M1292 866M1310 869L1336 874L1357 872L1377 873L1394 864L1423 861M1446 859M1457 856L1487 865L1504 861M1523 865L1550 856L1563 865M1584 870L1608 864L1633 868L1653 867L1679 871L1698 868L1718 878L1733 864L1753 870L1771 866L1790 862L1818 860L1838 854L1860 854L1881 866L1901 861L1913 861L1939 865L1962 863L1976 875L1998 872L2012 868M2035 878L2064 868L2086 864L2102 874L2120 871M2145 857L2163 860L2183 863L2204 863L2227 854L2252 856L2274 867M2296 865M2311 868M2333 872L2356 873L2380 871L2406 869L2422 878M2446 875M1121 880L1133 875L1164 876L1181 883L1198 884L1220 887L1246 888L1264 890L1286 888L1309 899L1334 899L1349 898M1377 894M1400 891L1417 889M1438 880L1457 880L1485 878L1511 875L1528 877L1549 886L1571 879M1586 888L1616 884M1632 894L1655 891L1675 893L1697 887L1717 891L1730 885L1748 891L1774 881L1790 879L1808 878L1830 886L1859 884L1872 881M1897 888L1917 886L1930 889M1959 893L1970 895L1994 889L2023 896L2041 889L2064 898M2086 894L2106 892L2125 885L2149 887M2172 879M2195 881L2216 875L2238 885L2251 887M2273 881L2297 884L2320 895L2344 895L2362 897L2389 896M2413 898L2427 887L2452 895M1116 902L1144 905M1155 902L1178 899L1210 905L1229 908L1247 907M1269 918L1295 912L1309 912L1339 914L1360 917L1374 913M1395 913L1418 903L1449 902L1460 907L1486 906L1504 901L1532 902L1553 900L1571 902L1588 902L1604 917M1627 917L1645 913L1663 916L1693 915L1707 919L1734 913L1743 910L1768 912L1787 906M1811 900L1830 903M1855 901L1869 908L1886 908M1915 907M1932 912L1959 914L1978 907L1994 910L2024 920L2035 916L2062 907L2081 914L2106 906L2129 903L2148 903L2176 904L2195 903L2212 907L2238 905L2254 900L2280 911M2305 907L2318 912M2349 909L2369 910L2385 909M2406 913L2436 919L2447 908M1127 918M1141 922L1160 920L1185 924L1215 925M1227 936M1251 937L1275 938M1293 931L1320 936L1339 937L1362 931L1378 937M1401 926M1423 923L1446 918L1467 923L1482 928M1501 919L1519 924L1548 928L1563 932L1580 928M1607 939M1627 937L1649 934M1671 939L1683 934L1709 932L1722 936L1746 929L1769 931L1782 922M1802 921L1828 927L1851 923L1869 925L1888 930M1916 932M1929 933L1958 933L1982 940L2001 940M2022 941L2037 938L2066 935L2082 926M2108 933L2126 922L2147 919L2175 929L2199 920L2219 917L2243 921L2253 927M2277 925L2297 930L2325 937L2340 939L2362 932L2390 934L2407 936L2426 937L2447 936M1128 943L1140 947L1162 945L1188 942L1213 953L1233 951L1254 956L1271 961L1302 961L1323 955M1344 950L1358 949L1379 954M1402 948L1418 943L1439 942L1457 946L1481 942L1497 946L1517 942M1542 950M1568 953M1587 958L1605 957M1616 952L1636 962L1665 958M1680 954L1699 956L1730 949L1738 945L1763 952L1790 944L1802 938L1824 947L1849 950M1876 949L1892 951L1909 945L1936 952L1953 951M1973 961L2003 963L2029 956L2047 954M2070 958L2083 945L2106 950L2130 940L2158 948L2175 937L2202 943L2213 941L2242 950L2261 949L2279 947M2309 951M2320 956L2341 952L2366 958L2389 959L2407 950L2431 948L2448 950M1129 967L1145 967M1172 966L1186 974L1213 966M1230 980L1250 975L1278 982L1297 981M1310 972L1343 980M1351 968L1374 977L1394 971L1423 969L1443 962M1453 958M1481 959M1504 968L1514 971L1534 969L1553 975L1584 979L1593 981M1620 982L1640 980M1662 981L1676 970L1703 971L1722 965L1747 963L1770 971L1786 960L1810 960L1828 959L1857 966M1871 961L1897 974L1921 966L1936 971L1963 972L1983 984M2007 972L2020 973M2050 977L2070 974L2090 973L2115 975L2137 971L2161 969L2180 958L2201 969L2219 970L2237 973L2261 972L2280 969L2302 972L2319 975L2351 980L2371 981L2390 984M2409 973M2423 973L2440 968M1133 991M1147 990M1174 993L1195 991L1206 997L1230 997M1251 998L1279 994L1294 1001L1314 1004L1333 1002L1357 1001L1369 988L1392 995M1408 984L1437 992L1451 984L1477 988M1498 990L1512 985L1530 993M1552 990L1583 998L1599 1000L1619 1001L1636 993L1654 992L1679 992L1697 994L1730 994L1742 993M1762 982L1786 985L1812 984M1835 980M1859 984L1880 982L1902 987M1924 997M1943 993L1957 994M1990 994L2009 1000L2031 994M2045 991M2078 993L2095 993L2111 984L2130 992L2152 992L2176 988L2194 989M2216 985L2241 983L2258 995L2279 992M2305 992L2318 994L2341 997L2364 999M2387 992L2405 1001L2419 988M2442 987M1127 1009L1143 1003L1169 1006M1186 1012L1205 1009L1228 1017L1256 1020L1265 1016L1294 1021L1316 1025M1336 1012M1357 1015L1368 1008L1396 1006L1406 1005M1437 1006L1455 1000M1472 1004L1489 1010M1512 1005L1541 1012L1551 1009L1578 1018L1591 1019L1621 1020L1636 1020L1662 1021L1678 1021L1710 1018L1730 1010M1753 1006L1766 1009M1796 1001M1809 1000L1834 1002L1853 1011L1880 1016L1899 1015L1916 1021L1941 1017M1966 1025L1987 1026M2011 1016L2035 1015M2058 1017M2069 1021L2092 1011L2113 1012L2130 1006M2152 1011M2171 1007L2195 1006L2219 1011M2234 1007M2254 1019L2274 1010L2299 1018M2324 1013L2336 1016L2361 1019L2378 1024L2402 1022L2426 1012L2446 1011M1120 1033L1142 1023L1164 1029L1193 1039L1206 1037L1232 1043L1250 1041L1263 1038L1290 1042L1312 1045L1334 1034L1343 1040L1369 1028M1391 1027L1406 1027L1430 1030L1445 1030L1473 1027L1494 1033L1507 1031L1536 1037L1557 1033L1583 1043L1595 1039L1626 1037L1640 1047L1668 1036L1688 1036L1709 1038L1724 1029L1747 1027L1766 1024L1793 1026M1811 1028L1844 1029L1858 1032L1881 1028M1903 1028L1927 1032M1944 1045M1971 1045L1991 1043L2013 1047L2027 1043L2049 1034L2077 1036M2098 1037M2115 1026L2128 1029L2158 1024L2170 1021L2191 1030L2209 1026L2233 1035L2262 1028L2271 1042M2302 1034M2314 1041M2334 1040L2356 1037L2371 1034L2393 1032L2419 1037L2435 1036M1127 1047L1144 1047L1170 1054L1178 1051L1207 1057L1227 1057L1248 1066M1259 1063L1281 1064L1309 1064L1322 1053M1348 1056L1362 1049L1388 1045L1410 1046L1426 1047L1450 1051L1465 1052L1489 1048L1516 1056L1537 1061L1553 1056L1581 1057L1596 1058M1626 1066M1647 1067L1670 1057M1685 1061L1704 1057L1726 1047L1754 1046L1781 1054M1797 1044L1814 1048L1841 1047L1865 1051L1887 1048L1899 1055L1926 1055L1949 1057M1966 1061L1992 1066M2008 1061M2036 1066L2052 1053L2071 1057L2089 1047M2118 1056L2127 1048L2154 1045M2167 1051L2196 1048L2207 1050L2227 1060L2247 1053L2276 1054L2288 1055L2309 1062L2338 1058M2350 1065L2374 1058M2390 1054L2422 1050M2434 1056M1126 1076L1140 1079L1162 1072L1181 1081L1204 1075M1218 1088L1237 1087L1260 1080L1280 1082L1310 1076L1329 1076L1341 1079L1364 1069M1386 1075L1413 1071L1423 1072L1452 1075L1478 1068L1499 1077M1513 1073L1536 1076L1558 1075L1578 1087L1602 1085M1630 1086L1644 1087L1673 1087L1694 1081M1717 1072L1736 1071L1760 1066M1778 1067L1803 1067M1825 1074L1847 1066L1869 1076L1886 1077L1899 1083L1926 1080L1944 1086M1971 1088M1984 1081M2005 1077L2026 1074L2052 1074L2063 1070L2092 1069M2108 1070L2133 1075L2147 1071M2174 1069L2195 1074L2207 1078L2231 1070L2251 1082L2271 1080M2290 1087M2314 1079M2330 1081L2359 1085L2369 1086L2389 1079L2415 1078L2437 1068M1118 1096M1142 1093L1155 1100L1183 1096L1204 1108L1219 1102L1243 1110M1257 1101M1280 1106M1299 1101L1324 1101L1341 1102L1373 1094M1392 1087M1415 1091L1435 1095L1451 1096L1471 1086L1497 1100M1524 1103L1541 1105L1563 1097L1586 1107L1605 1105M1625 1101L1649 1103L1671 1095L1687 1096L1718 1099M1733 1090L1758 1087L1780 1096M1796 1091M1824 1094L1845 1095L1860 1099L1889 1091L1910 1099L1919 1096L1948 1106L1960 1103L1987 1110L2003 1106L2022 1097L2041 1097L2067 1093L2081 1090L2100 1087M2124 1090L2142 1090L2166 1097L2187 1098L2207 1091M2229 1092L2244 1094L2272 1108L2289 1101L2310 1102L2335 1102L2349 1107L2376 1094L2401 1101L2416 1097L2445 1092M1114 1111L1137 1118L1160 1125L1173 1119L1203 1127L1220 1127L1238 1131L1262 1123L1278 1118L1309 1125M1319 1116L1347 1116M1367 1119L1389 1112L1418 1113L1434 1109L1455 1114L1482 1111M1498 1115L1520 1124L1544 1118L1563 1127L1583 1127M1603 1121M1625 1128L1647 1120M1668 1118L1698 1121L1721 1122L1738 1119L1753 1118L1778 1107L1803 1116L1819 1107L1845 1117L1862 1122L1875 1113L1897 1115M1924 1125L1937 1120M1958 1126L1984 1131L2000 1129L2021 1120L2039 1115L2069 1122M2086 1109M2099 1107L2122 1114L2138 1112L2167 1106L2184 1118M2207 1116L2232 1120L2246 1120L2275 1128M2296 1125M2307 1121L2332 1127L2348 1127M2380 1121L2392 1122L2419 1118L2443 1117M1113 1141L1141 1143L1158 1138M1176 1140L1204 1148L1224 1150L1248 1148M1260 1149L1281 1145L1302 1146M1328 1136M1355 1131L1377 1137L1389 1136L1416 1137L1439 1131M1465 1128L1485 1130M1500 1133L1529 1140M1549 1140L1571 1147M1584 1146L1614 1142L1634 1142L1651 1149L1680 1148M1694 1140L1720 1140L1736 1139L1756 1138L1777 1127M1801 1128L1820 1128M1845 1136L1861 1133L1880 1139L1895 1147L1913 1144L1933 1150L1964 1140L1979 1145L2002 1146L2017 1147L2036 1134L2064 1131L2077 1134M2099 1128L2128 1132L2147 1129M2169 1130L2190 1137L2212 1142L2229 1141L2254 1142L2265 1150M2296 1148L2317 1142L2335 1149L2364 1149M2375 1144L2402 1137L2419 1131L2445 1134M1111 1155L1136 1163L1158 1158M1183 1163L1206 1172M1217 1168L1250 1165L1266 1163L1281 1160L1304 1159L1333 1160L1359 1159L1373 1160L1398 1154M1423 1155L1438 1155M1459 1161L1480 1163L1499 1153L1527 1158M1548 1160L1573 1168L1592 1172L1617 1169L1635 1159L1647 1163L1679 1159L1695 1153L1713 1162L1736 1159L1748 1149L1771 1157L1790 1159L1812 1160L1835 1155M1861 1158L1878 1157L1900 1171L1911 1169L1933 1162L1954 1169M1982 1172L2003 1165L2020 1157L2041 1160L2057 1162L2077 1150L2097 1149L2123 1157L2139 1154L2166 1156L2185 1158L2202 1154L2229 1159L2255 1161M2277 1163L2290 1167M2315 1165L2342 1162L2363 1168L2382 1162L2410 1160L2422 1151L2443 1152M1110 1181M1136 1179L1159 1190L1178 1182M1200 1185L1230 1191L1246 1183L1263 1181L1295 1186L1308 1183L1328 1179L1354 1172L1381 1178L1399 1170M1423 1173L1444 1170L1469 1170L1481 1178M1502 1176M1529 1190L1546 1183L1571 1184L1588 1190L1609 1183M1625 1187L1657 1190M1666 1182L1691 1175L1714 1177M1736 1172L1757 1178L1771 1169L1792 1170L1814 1179L1833 1185L1846 1184L1876 1179L1891 1180L1914 1190L1932 1191L1953 1190M1972 1192L1995 1178L2012 1185L2043 1181L2055 1182L2083 1170L2100 1176M2117 1168M2143 1180L2173 1174M2194 1183L2215 1183L2238 1186L2260 1187L2272 1188L2298 1186L2318 1188L2343 1183L2361 1184L2385 1181L2409 1175L2429 1174L2454 1178M1119 343M1122 363M1120 394L1132 410L1127 426L1120 455M1118 467L1120 490M1114 510L1120 528M1115 557L1113 571M1113 592L1117 620L1116 633L1118 660L1131 672L1130 690L1129 714L1128 736L1118 759L1114 778M1121 792M1115 813L1114 843L1115 857L1121 880M1116 902L1127 918L1128 943L1129 967L1133 991L1127 1009L1120 1033L1127 1047L1126 1076L1118 1096L1114 1111L1113 1141L1111 1155L1110 1181M1145 342L1139 364L1144 388L1149 414L1154 426M1152 450M1150 467M1139 497M1138 509M1133 528L1138 554L1131 576L1135 593M1138 615M1140 628M1152 653M1149 673L1148 697L1147 709M1150 739L1142 756L1139 769L1142 795L1130 824L1138 834L1133 863M1133 875L1144 905L1141 922L1140 947L1145 967M1147 990L1143 1003L1142 1023L1144 1047L1140 1079L1142 1093M1137 1118M1141 1143M1136 1163L1136 1179M1165 344L1162 365L1172 388L1169 407L1175 433L1168 441L1167 473M1159 489M1152 505L1160 535L1154 547L1161 571L1161 593L1163 615L1165 626M1168 651L1167 678L1167 694M1165 717L1162 731L1163 755L1161 781L1159 797L1154 822L1158 836L1154 862M1164 876L1155 902L1160 920L1162 945M1172 966L1174 993L1169 1006L1164 1029M1170 1054M1162 1072L1155 1100L1160 1125M1158 1138L1158 1158M1159 1190M1181 344M1183 369L1188 385L1193 411M1183 425L1186 451L1182 463L1179 485L1174 512L1180 524L1173 551M1178 568L1175 591L1188 605L1183 624L1190 643M1188 674L1184 689L1187 714L1185 729L1185 753L1175 771M1179 799M1172 818L1177 836M1182 862L1181 883M1178 899M1185 924M1188 942L1186 974L1195 991L1186 1012L1193 1039L1178 1051M1181 1081L1183 1096L1173 1119L1176 1140M1183 1163L1178 1182M1202 341L1212 357M1213 386L1210 407M1214 429L1212 448M1210 465L1206 490M1202 509L1203 522L1200 548L1196 572L1208 587L1199 604L1211 622L1217 645L1207 664L1216 692L1205 713L1202 731L1199 751L1204 773L1200 796L1193 819L1197 839L1199 868L1198 884L1210 905L1215 925L1213 953L1213 966L1206 997L1205 1009L1206 1037L1207 1057M1204 1075M1204 1108L1203 1127M1204 1148L1206 1172M1200 1185M1225 334L1229 357M1228 380M1235 402L1230 417L1234 438L1221 464L1220 478L1215 506L1216 529L1215 543L1220 567L1219 583L1226 608L1233 624M1228 644L1238 670L1235 688L1229 714L1224 738L1230 757M1219 778M1223 797L1215 824L1218 837L1221 870M1220 887L1229 908L1227 936L1233 951L1230 980M1230 997L1228 1017L1232 1043L1227 1057L1218 1088L1219 1102L1220 1127L1224 1150L1217 1168M1230 1191M1251 341L1252 352L1251 375L1252 396L1247 425L1243 435M1242 457L1245 477L1235 502L1242 526L1245 545M1247 569M1240 583M1253 613M1246 635L1250 655L1248 671M1253 695L1248 710L1247 732M1240 764L1239 782L1243 806L1235 827M1237 847L1238 867M1246 888L1247 907L1251 937M1254 956L1250 975L1251 998L1256 1020L1250 1041L1248 1066L1237 1087M1243 1110M1238 1131L1248 1148L1250 1165M1246 1183M1269 331L1279 362L1278 376L1268 392L1267 419L1268 441L1258 463L1256 486L1263 501L1263 530L1258 545L1265 564L1274 589L1265 614M1270 637L1269 648M1274 678L1270 698L1268 714L1265 739L1262 756L1263 789M1265 803L1261 822M1257 844M1267 864L1264 890M1269 918L1275 938M1271 961M1278 982L1279 994M1265 1016L1263 1038L1259 1063L1260 1080L1257 1101L1262 1123L1260 1149M1266 1163L1263 1181M1297 340L1296 355L1296 379L1288 400M1286 419L1294 442M1290 463M1282 486L1287 504L1282 530L1289 543L1288 564L1292 594M1297 617L1300 639L1299 651L1290 673M1294 705L1286 723L1286 738L1285 761L1289 780M1286 814L1281 829L1287 847M1292 866L1286 888L1295 912L1293 931L1302 961L1297 981L1294 1001L1294 1021M1290 1042L1281 1064M1280 1082L1280 1106M1278 1118M1281 1145M1281 1160L1295 1186M1317 333L1312 350L1322 376L1311 394L1317 415L1310 444M1311 456L1302 489L1304 511M1306 532L1302 546L1313 569L1317 594L1316 611L1312 635L1311 659M1322 683L1315 700L1308 722L1302 738L1305 767L1304 791L1302 806M1309 828L1304 848M1310 869L1309 899L1309 912L1320 936L1323 955L1310 972L1314 1004L1316 1025L1312 1045L1309 1064L1310 1076L1299 1101L1309 1125L1302 1146M1304 1159L1308 1183M1344 329L1336 353L1338 378L1329 404L1335 421L1328 444L1322 464L1324 482M1319 514L1325 533L1330 556M1335 570L1335 597M1341 621M1333 644L1339 660M1332 680L1329 699L1336 728L1335 749M1322 768L1329 792L1324 816L1322 837L1332 847L1336 874L1334 899M1339 914M1339 937L1344 950M1343 980L1333 1002M1336 1012L1334 1034L1322 1053M1329 1076L1324 1101L1319 1116L1328 1136M1333 1160L1328 1179M1364 334L1363 354L1357 383L1359 404L1356 426M1342 449L1352 473L1339 490L1347 509M1348 530M1345 550L1351 573M1358 599M1360 624L1363 642M1361 657L1355 686M1358 699L1356 731L1343 750L1341 768L1347 791L1341 803L1352 834L1351 856L1357 872M1349 898L1360 917L1362 931L1358 949L1351 968L1357 1001L1357 1015L1343 1040M1348 1056L1341 1079L1341 1102L1347 1116L1355 1131M1359 1159L1354 1172M1375 334L1373 367L1377 383L1372 401M1368 431L1365 453L1365 466L1368 497L1371 510L1365 536L1368 554L1374 574L1380 595L1377 615L1379 640M1384 666M1379 689L1369 701L1367 723M1375 748L1368 762L1364 785L1366 811L1366 825L1368 849L1377 873M1377 894M1374 913L1378 937M1379 954M1374 977L1369 988L1368 1008M1369 1028M1362 1049L1364 1069M1373 1094M1367 1119M1377 1137L1373 1160L1381 1178M1398 346M1400 359L1397 391L1392 406L1391 422L1391 448L1386 472M1382 495M1395 516L1385 542M1394 553L1390 582L1401 599M1401 625M1405 642L1394 658M1402 684L1395 709L1385 727M1384 746L1386 761M1391 792L1392 805L1387 822L1397 849L1394 864M1400 891L1395 913L1401 926L1402 948L1394 971L1392 995L1396 1006L1391 1027L1388 1045L1386 1075M1392 1087M1389 1112L1389 1136L1398 1154L1399 1170M1418 345M1421 360L1420 392L1410 408L1405 430L1405 449L1414 469L1407 495L1408 519L1408 531L1413 554L1415 576M1424 595M1418 624L1423 637L1420 662L1421 686L1416 707L1414 722L1408 740L1407 769L1414 787L1416 801M1406 825L1414 839L1423 861L1417 889L1418 903L1423 923L1418 943M1423 969L1408 984L1406 1005L1406 1027L1410 1046L1413 1071L1415 1091L1418 1113L1416 1137M1423 1155L1423 1173M1444 345M1441 374M1444 386L1432 416M1431 429L1432 455M1433 477L1425 492L1431 512M1429 542L1443 561L1437 578M1438 593L1449 616L1439 634L1438 655L1441 680L1429 695L1431 723M1430 735L1430 765L1427 785L1435 797M1433 823L1437 841L1446 859L1438 880M1449 902L1446 918M1439 942L1443 962L1437 992L1437 1006L1430 1030M1426 1047M1423 1072M1435 1095L1434 1109M1439 1131M1438 1155M1444 1170M1464 342L1466 371L1459 396L1461 412L1448 430M1445 447M1454 477L1451 500L1456 509M1454 531L1454 562L1461 578L1467 602L1465 620M1466 638M1460 653L1462 681L1458 696L1455 715M1456 741L1453 754M1454 780L1447 795L1454 814M1462 838L1457 856M1457 880L1460 907M1467 923L1457 946L1453 958L1451 984M1455 1000M1445 1030L1450 1051L1452 1075M1451 1096L1455 1114L1465 1128L1459 1161L1469 1170M1478 344L1478 367L1483 385L1472 417L1470 436L1472 453L1473 470M1467 493L1479 510L1472 528L1476 553L1485 573M1487 593L1484 611L1479 640L1482 660L1483 671L1478 694M1477 714L1473 742L1478 760L1474 775L1469 798M1480 820L1480 841L1487 865L1485 878L1486 906M1482 928L1481 942L1481 959L1477 988L1472 1004L1473 1027L1465 1052L1478 1068M1471 1086L1482 1111L1485 1130L1480 1163M1481 1178M1506 347M1497 372L1493 388L1493 407L1487 433M1491 447L1490 469L1498 497L1498 517L1502 533M1509 555L1510 576M1510 596L1502 616L1501 631M1497 654L1503 667L1491 691L1495 710M1494 731L1487 759L1495 774M1497 792L1500 818L1507 836L1504 861M1511 875M1504 901M1501 919L1497 946L1504 968L1498 990L1489 1010L1494 1033L1489 1048L1499 1077M1497 1100L1498 1115M1500 1133M1499 1153L1502 1176M1522 347M1522 370L1513 384L1509 406L1518 423M1514 442M1517 463L1512 484L1520 511M1524 532L1527 548L1521 574L1528 587M1530 609M1520 627M1525 646L1522 672L1510 697L1509 718M1510 729L1512 750L1510 773L1524 794L1524 823L1523 839M1523 865L1528 877L1532 902L1519 924L1517 942M1514 971L1512 985L1512 1005L1507 1031L1516 1056L1513 1073L1524 1103L1520 1124L1529 1140L1527 1158M1529 1190M1544 341L1539 361M1533 387M1536 405M1540 428L1531 445L1531 469M1543 492L1538 500M1538 528L1542 549L1553 571L1545 587L1541 612L1549 627L1546 655L1538 676M1537 689L1537 715L1528 737L1541 755M1535 782M1536 792L1548 821L1552 835L1550 856M1549 886L1553 900L1548 928M1542 950L1534 969L1530 993L1541 1012L1536 1037L1537 1061L1536 1076M1541 1105M1544 1118L1549 1140M1548 1160L1546 1183M1569 344L1566 368L1562 387L1552 402L1560 420L1561 445L1553 458L1559 478M1556 499L1564 529L1563 541L1564 570M1566 585L1571 604L1560 628L1560 648L1560 669L1556 690L1549 706L1560 731L1560 750L1559 775L1566 803L1564 817M1574 844L1563 865L1571 879L1571 902L1563 932L1568 953L1553 975L1552 990M1551 1009L1557 1033M1553 1056M1558 1075L1563 1097L1563 1127M1571 1147L1573 1168M1571 1184M1582 340L1586 363M1574 382M1570 397L1574 419L1582 440M1572 462L1587 480L1586 502L1591 528L1588 538M1592 559L1591 592L1589 612L1582 633L1586 650L1583 676L1571 697L1572 710L1573 737L1582 751L1578 775L1580 794M1586 828M1588 846M1584 870L1586 888L1588 902L1580 928L1587 958L1584 979L1583 998M1578 1018L1583 1043L1581 1057M1578 1087L1586 1107M1583 1127M1584 1146L1592 1172L1588 1190M1605 342M1606 360L1601 373L1592 397L1604 420L1595 436M1598 466M1608 483L1606 507L1603 528M1609 548L1605 571L1604 587L1613 608L1600 636M1600 657L1601 671M1599 700M1594 714M1603 743L1597 757L1601 776M1610 799L1607 823M1608 840L1608 864L1616 884L1604 917L1607 939L1605 957M1593 981M1599 1000M1591 1019L1595 1039L1596 1058L1602 1085L1605 1105L1603 1121L1614 1142L1617 1169L1609 1183M1628 332M1619 356L1625 382M1612 391L1616 417L1625 442L1627 466L1629 477L1623 499L1636 529L1634 545L1634 563L1625 583L1628 611M1619 636L1626 651M1619 674L1617 698L1612 716L1615 744L1616 763L1619 788L1634 805L1629 822M1635 847M1633 868L1632 894L1627 917M1627 937L1616 952L1620 982L1619 1001L1621 1020L1626 1037L1626 1066L1630 1086L1625 1101L1625 1128L1634 1142L1635 1159L1625 1187M1651 329L1640 349L1636 382L1636 394M1636 412M1639 433L1641 455L1651 479L1652 497L1647 521L1655 546L1647 564L1655 591L1644 608M1647 630L1639 653L1643 674L1636 693L1641 716L1645 746L1640 761L1646 785M1652 805L1658 823L1653 850L1653 867L1655 891L1645 913M1649 934M1636 962M1640 980L1636 993L1636 1020M1640 1047L1647 1067M1644 1087M1649 1103L1647 1120L1651 1149M1647 1163L1657 1190M1664 337L1656 352L1659 376L1661 398L1656 424L1663 443L1660 462L1667 489M1665 504L1668 521L1669 550L1670 574L1677 592L1664 617L1665 633L1662 664L1659 680L1666 706M1665 724L1661 740L1668 765L1670 785L1675 809L1675 836L1679 855L1679 871L1675 893L1663 916L1671 939L1665 958L1662 981L1654 992L1662 1021L1668 1036L1670 1057L1673 1087M1671 1095L1668 1118L1680 1148L1679 1159L1666 1182M1681 335M1680 359L1688 382L1684 402M1679 427L1683 440L1690 464L1695 482M1688 506M1699 534L1694 555L1692 569M1685 594L1687 618L1682 635L1687 666L1680 679L1679 709L1685 722L1689 744M1693 769L1686 783L1691 815L1692 832L1689 853L1698 868L1697 887M1693 915L1683 934M1680 954L1676 970L1679 992L1678 1021L1688 1036L1685 1061M1694 1081L1687 1096L1698 1121M1694 1140L1695 1153L1691 1175M1700 339L1709 358L1698 379L1705 407L1701 421L1708 451L1706 466M1709 488M1711 512M1718 537L1721 553L1719 580L1713 603L1707 619M1704 647M1707 666M1706 688L1706 702M1703 728L1705 748L1714 769L1710 786L1710 813L1714 827L1715 851L1718 878M1717 891L1707 919L1709 932L1699 956M1703 971M1697 994L1710 1018L1709 1038L1704 1057M1717 1072L1718 1099M1721 1122L1720 1140L1713 1162L1714 1177M1729 340M1730 367L1723 381L1722 402L1726 422L1725 442L1733 472L1734 490L1737 509L1739 532M1737 559L1730 583L1738 599L1724 615L1732 647L1718 663L1723 683L1725 711L1724 719L1727 751L1737 772L1737 789L1731 811L1733 824L1741 849L1733 864L1730 885L1734 913L1722 936L1730 949M1722 965L1730 994L1730 1010M1724 1029L1726 1047L1736 1071L1733 1090M1738 1119L1736 1139L1736 1159L1736 1172M1751 339L1750 362L1740 383M1751 402L1745 435L1748 449L1756 476L1751 490L1759 515L1753 531L1756 554L1756 582L1751 595L1755 619L1741 639L1750 669L1740 681L1745 710L1752 729L1747 740L1749 769L1762 785L1756 812L1762 831L1757 853L1753 870M1748 891L1743 910L1746 929M1738 945L1747 963L1742 993L1753 1006L1747 1027L1754 1046L1760 1066L1758 1087M1753 1118L1756 1138L1748 1149L1757 1178M1769 345M1762 362L1768 381L1769 411L1774 435L1774 448L1777 468L1780 500L1774 522L1782 533L1780 563M1777 584L1774 596L1764 622L1772 636L1762 661L1761 683L1763 702L1766 717L1773 745L1773 768L1783 786L1773 806L1784 819L1777 845M1771 866L1774 881L1768 912L1769 931L1763 952L1770 971L1762 982L1766 1009L1766 1024L1781 1054L1778 1067L1780 1096L1778 1107L1777 1127L1771 1157L1771 1169M1788 346L1782 364M1787 388L1782 415L1792 437L1798 456L1801 471L1793 496L1797 511L1797 536L1801 560L1799 583M1788 593M1793 615L1790 637L1788 658L1788 675L1791 697M1795 723M1798 744L1799 766L1794 778M1799 808L1802 820L1798 847L1790 862L1790 879L1787 906L1782 922L1790 944L1786 960M1786 985L1796 1001L1793 1026L1797 1044L1803 1067L1796 1091L1803 1116M1801 1128L1790 1159L1792 1170M1812 353L1809 374L1802 388L1815 413L1818 433M1816 449L1819 472L1824 488L1816 517L1814 532M1823 558L1811 579L1806 599M1811 615M1814 631M1807 652L1813 676L1807 703L1807 715M1821 745L1814 757L1822 786L1827 801L1822 821L1820 844M1818 860M1808 878L1811 900L1802 921M1802 938M1810 960L1812 984M1809 1000L1811 1028L1814 1048M1825 1074L1824 1094M1819 1107M1820 1128L1812 1160L1814 1179M1828 350L1833 369L1831 390L1835 415L1837 425L1844 449L1843 469L1846 488L1847 517L1838 537L1840 553L1836 578L1827 601L1830 609L1832 633L1827 655L1834 680M1831 700L1830 720L1838 736M1843 763L1840 781L1838 794L1838 824L1837 833M1838 854L1830 886M1830 903L1828 927L1824 947M1828 959M1835 980L1834 1002L1844 1029L1841 1047L1847 1066L1845 1095L1845 1117L1845 1136M1835 1155L1833 1185M1843 350L1851 372M1845 395L1849 410M1859 429L1864 447L1858 467L1864 491M1861 508L1859 529L1856 553L1855 577L1847 597L1844 619L1844 626M1843 648L1857 669M1850 689L1853 719L1855 732L1865 749L1862 780M1860 796L1855 820L1861 839M1860 854M1859 884L1855 901L1851 923L1849 950L1857 966L1859 984L1853 1011L1858 1032L1865 1051L1869 1076L1860 1099L1862 1122L1861 1133L1861 1158M1846 1184M1872 353L1865 369L1876 393L1875 412M1882 429L1878 451L1879 473M1886 486L1877 510L1888 529L1873 548L1876 566L1868 583L1876 610M1874 631L1877 654M1872 677L1874 688M1882 707M1882 728M1885 749M1878 775L1880 792L1886 817L1882 842M1881 866L1872 881M1869 908M1869 925M1876 949M1871 961L1880 982M1880 1016L1881 1028M1887 1048L1886 1077L1889 1091L1875 1113M1880 1139L1878 1157M1876 1179M1895 341L1897 368L1889 382L1901 409L1897 419M1900 451L1906 463L1904 487L1905 504L1906 528L1902 550L1892 562L1896 584L1892 605M1887 628M1898 651M1888 664M1903 688L1903 711L1905 729L1905 758L1910 772L1907 798L1903 824M1894 836L1901 861L1897 888L1886 908L1888 930L1892 951L1897 974M1902 987L1899 1015M1903 1028L1899 1055L1899 1083L1910 1099L1897 1115L1895 1147L1900 1171L1891 1180M1911 344L1917 361L1910 386L1920 407L1928 418L1924 439L1924 470M1925 486L1926 503L1916 523M1921 542M1916 560M1916 582L1916 606M1918 624L1918 654L1917 670L1920 686L1925 717L1924 740M1921 761L1923 770L1922 804L1918 821L1913 845L1913 861M1917 886L1915 907L1916 932L1909 945L1921 966L1924 997L1916 1021L1927 1032M1926 1055L1926 1080L1919 1096M1924 1125M1913 1144L1911 1169L1914 1190M1927 338L1931 363L1935 375L1943 402L1944 418L1942 440L1947 458L1946 481L1950 506L1941 527L1938 544L1936 560L1928 590L1939 611M1934 624M1940 643L1943 674M1942 691L1941 708L1941 729L1949 754L1942 775L1941 801L1945 820L1934 838L1939 865L1930 889L1932 912L1929 933M1936 952L1936 971M1943 993M1941 1017L1944 1045M1949 1057L1944 1086L1948 1106M1937 1120L1933 1150L1933 1162L1932 1191M1951 332L1955 361L1959 383L1959 392L1963 422L1970 445L1972 462M1961 483L1962 507L1960 526L1961 543M1956 565L1957 591M1958 614L1951 633M1959 648L1960 679M1962 688L1971 715M1967 733L1964 758L1970 777M1961 807L1965 823L1962 847L1962 863M1959 893L1959 914L1958 933L1953 951M1963 972L1957 994L1966 1025M1971 1045L1966 1061L1971 1088L1960 1103M1958 1126M1964 1140L1954 1169L1953 1190M1971 338L1985 354L1986 373M1980 395M1993 415L1984 438L1995 455M1988 478L1979 503M1983 520L1982 551L1977 571L1978 583L1972 604L1979 627L1981 650L1982 675M1980 701M1993 721L1992 733M1993 763L1986 780M1990 802M1983 828L1973 851L1976 875L1970 895L1978 907M1982 940L1973 961L1983 984L1990 994L1987 1026L1991 1043M1992 1066L1984 1081L1987 1110M1984 1131L1979 1145L1982 1172L1972 1192M1993 331M1999 361L1999 381L2001 401L2011 416L2006 446M2009 465L2012 486L2004 500L2007 520L1995 549L1991 573M1998 593L1992 608L1992 628L2001 661L2006 676L2005 696M2012 725L2014 747L2005 758L2009 791L2009 812L2005 827L2002 850L1998 872L1994 889L1994 910L2001 940L2003 963L2007 972L2009 1000L2011 1016L2013 1047L2008 1061M2005 1077L2003 1106M2000 1129M2002 1146L2003 1165M1995 1178M2018 339L2025 351L2026 379L2029 400L2031 418L2026 435L2035 468M2028 480L2020 509M2027 523M2023 548L2017 572M2016 598L2012 609L2021 636L2024 655L2024 681L2024 699L2032 722L2035 744L2025 770L2030 784L2023 807L2024 831L2014 854L2012 868L2023 896M2024 920L2022 941L2029 956L2020 973L2031 994L2035 1015L2027 1043L2036 1066L2026 1074L2022 1097L2021 1120M2017 1147M2020 1157L2012 1185M2036 334M2039 352L2042 372L2052 402M2047 417M2046 442L2045 462L2048 481M2039 509M2036 526L2040 558L2041 578L2035 601M2040 622L2038 635L2045 659L2045 688L2047 697L2046 727L2049 748M2047 768L2052 795L2045 815L2039 832M2039 853L2035 878L2041 889M2035 916L2037 938L2047 954L2050 977M2045 991L2058 1017M2049 1034L2052 1053M2052 1074L2041 1097L2039 1115L2036 1134L2041 1160L2043 1181M2064 342L2071 363M2072 379M2071 395L2069 429L2078 450L2066 463L2064 488L2072 506L2066 539L2054 555L2058 575M2062 591L2060 625L2065 643L2072 659L2072 684L2074 703M2072 726L2073 746L2069 770L2070 783L2061 812M2060 836L2067 855L2064 868L2064 898L2062 907L2066 935M2070 958L2070 974M2078 993L2069 1021L2077 1036L2071 1057M2063 1070M2067 1093L2069 1122L2064 1131L2057 1162L2055 1182M2089 344L2083 365L2085 388M2097 408L2094 423L2097 454M2098 471L2084 491M2082 514L2077 535L2077 560L2086 572L2074 601L2088 615M2089 643L2086 665L2086 682M2089 708L2100 721M2091 746M2090 763L2093 793L2087 808L2083 832L2086 845M2086 864L2086 894L2081 914M2082 926L2083 945L2090 973L2095 993L2092 1011L2098 1037M2089 1047L2092 1069L2081 1090L2086 1109L2077 1134L2077 1150M2083 1170M2104 341L2116 366L2114 389M2115 407L2120 435L2120 448L2118 470L2109 487L2106 517L2103 540L2107 558L2103 581L2106 594L2105 620L2103 636L2105 664L2111 684L2109 701L2118 719L2116 750L2117 767M2107 782L2107 812L2104 827L2099 848L2102 874L2106 892L2106 906L2108 933L2106 950L2115 975L2111 984L2113 1012L2115 1026L2118 1056M2108 1070L2100 1087L2099 1107L2099 1128L2097 1149L2100 1176M2127 349L2130 367L2129 392L2138 403L2135 426L2131 458L2137 473L2131 489L2130 512L2120 537L2117 559L2116 580L2121 603L2121 627M2132 640L2138 662L2135 687L2140 698L2138 727L2140 739M2135 768L2125 785M2122 810L2120 820L2116 851L2120 871L2125 885L2129 903M2126 922M2130 940L2137 971L2130 992L2130 1006M2128 1029M2127 1048M2133 1075L2124 1090M2122 1114L2128 1132L2123 1157L2117 1168M2157 342M2149 361L2150 394L2160 407L2153 426M2158 447L2149 478M2152 499L2144 513M2142 541M2144 560L2146 584L2141 603L2144 620L2154 634L2151 660M2162 680L2156 705L2154 722L2152 741L2158 755L2154 784L2144 806L2150 823L2140 840L2145 857L2149 887M2148 903L2147 919L2158 948L2161 969M2152 992L2152 1011L2158 1024M2154 1045L2147 1071L2142 1090L2138 1112L2147 1129M2139 1154L2143 1180M2168 344M2181 371L2177 388L2172 408L2175 427M2178 451L2178 469L2170 489L2161 520M2162 541L2164 558L2163 583L2166 591L2171 623L2177 635L2176 653L2177 680L2182 694L2183 720M2176 737L2170 755L2175 776L2171 796M2165 820M2162 837L2163 860M2172 879L2176 904M2175 929L2175 937L2180 958L2176 988M2171 1007M2170 1021L2167 1051M2174 1069L2166 1097L2167 1106L2169 1130L2166 1156L2173 1174M2191 348L2197 375L2199 395L2202 407M2194 428L2194 450L2194 474L2190 491L2191 516L2183 530L2189 554L2186 574M2187 596L2194 613L2199 640L2192 651L2205 674L2197 699M2198 713L2192 731L2193 762L2187 780L2192 804M2189 815L2190 840M2183 863L2195 881L2195 903M2199 920L2202 943L2201 969L2194 989L2195 1006M2191 1030L2196 1048L2195 1074L2187 1098M2184 1118M2190 1137L2185 1158L2194 1183M2217 344L2218 373L2217 384L2223 415L2219 435L2212 444L2209 469M2216 486L2201 516L2209 531L2205 557M2213 566L2209 594L2213 608L2216 626M2216 652L2220 677M2218 700L2213 712L2213 734L2217 749L2212 774L2205 790L2202 821L2206 837L2204 863L2216 875L2212 907L2219 917L2213 941L2219 970L2216 985L2219 1011L2209 1026L2207 1050L2207 1078L2207 1091M2207 1116L2212 1142L2202 1154M2215 1183M2232 345L2244 363L2241 383L2240 406L2242 426M2233 446M2228 464L2235 495M2231 508L2222 531L2224 551L2232 571L2227 593L2241 616L2243 630L2237 647L2237 669L2237 698L2237 709L2242 739L2229 758L2232 773L2223 802L2226 819L2222 836L2227 854L2238 885L2238 905L2243 921L2242 950M2237 973L2241 983L2234 1007M2233 1035L2227 1060M2231 1070L2229 1092L2232 1120L2229 1141L2229 1159M2238 1186M2258 345L2258 362L2257 380M2261 407L2258 425L2262 440L2250 467M2253 490M2252 505M2243 530L2248 550L2249 572L2252 589L2253 602L2265 626L2256 650M2268 674L2261 688L2256 707M2261 739L2255 753M2244 774L2242 802L2252 823L2254 843L2252 856M2251 887L2254 900L2253 927L2261 949L2261 972L2258 995L2254 1019M2262 1028L2247 1053L2251 1082L2244 1094L2246 1120L2254 1142L2255 1161M2260 1187M2287 344M2279 363L2277 378M2285 404M2278 420L2282 439M2275 459L2267 490L2266 499L2272 528M2266 551L2271 565M2278 585M2276 605L2277 632L2287 650L2283 665L2281 686L2282 715L2282 735M2273 751L2265 778L2265 801L2274 814L2275 838L2274 867M2273 881M2280 911M2277 925L2279 947L2280 969L2279 992L2274 1010M2271 1042L2276 1054L2271 1080M2272 1108L2275 1128M2265 1150L2277 1163L2272 1188M2303 340L2301 358L2301 377M2304 394M2294 417L2294 445L2287 459L2291 488L2287 497L2292 521M2290 538L2295 569L2296 590M2306 612L2301 624M2305 651M2309 673M2305 689L2296 710L2300 729M2298 755L2289 778L2285 796L2289 826L2288 838L2296 865M2297 884L2305 907L2297 930L2309 951L2302 972L2305 992L2299 1018M2302 1034L2288 1055L2290 1087L2289 1101M2296 1125M2296 1148L2290 1167L2298 1186M2327 331M2320 362M2328 375L2318 395M2326 414L2321 439L2316 456L2317 477M2309 505L2310 522L2311 543M2313 564L2325 590L2327 602L2323 631M2321 654L2328 679L2327 695L2320 715L2319 739M2318 761L2313 778L2313 797L2316 820L2314 845L2311 868M2320 895M2318 912L2325 937M2320 956L2319 975L2318 994L2324 1013L2314 1041L2309 1062L2314 1079M2310 1102L2307 1121L2317 1142L2315 1165L2318 1188M2351 339L2344 355L2345 372M2346 395L2340 420L2331 439L2331 456L2336 487L2335 507L2338 518L2329 544M2337 567L2342 585L2348 612L2339 632M2345 654M2350 674L2341 693M2345 716L2334 741L2328 759M2332 777L2330 811L2329 824M2335 848L2333 872M2344 895M2349 909L2340 939L2341 952L2351 980L2341 997M2336 1016M2334 1040L2338 1058L2330 1081L2335 1102L2332 1127L2335 1149L2342 1162L2343 1183M2372 338L2368 360L2363 370L2364 391M2364 415L2355 445M2358 461L2347 480L2356 501L2360 519M2356 549L2365 566L2358 596L2368 618L2366 634M2368 655M2361 674L2364 695L2357 726M2362 742M2351 769L2359 787L2356 812L2350 827L2358 849M2356 873L2362 897M2369 910L2362 932L2366 958L2371 981L2364 999L2361 1019L2356 1037L2350 1065L2359 1085L2349 1107L2348 1127M2364 1149L2363 1168L2361 1184M2387 333L2386 361L2382 370L2377 395L2377 416M2373 439L2369 457L2377 480L2375 505L2373 524L2377 546L2387 570L2388 597M2381 610M2383 639L2385 655L2386 680L2388 697L2375 724L2379 742L2376 760L2380 782L2381 803L2380 831L2383 848L2380 871M2389 896M2385 909L2390 934M2389 959L2390 984L2387 992M2378 1024L2371 1034L2374 1058M2369 1086M2376 1094L2380 1121M2375 1144L2382 1162M2385 1181M2404 337L2408 357L2409 379L2405 402M2399 421L2402 437L2394 465L2400 484L2400 509L2403 530L2397 555L2404 571L2405 597L2412 623M2413 643M2404 660L2402 678L2403 704L2398 729L2395 751M2391 766L2397 792L2393 814M2398 826L2407 853L2406 869L2413 898L2406 913L2407 936L2407 950L2409 973L2405 1001L2402 1022L2393 1032L2390 1054L2389 1079L2401 1101L2392 1122L2402 1137L2410 1160M2409 1175M2424 331M2429 352L2422 380M2425 399L2426 428L2416 450L2418 462L2420 484L2414 513L2418 538L2429 555L2426 582L2435 602L2432 616L2427 643L2427 663L2428 685M2420 708M2421 729M2411 743L2416 769M2414 784L2420 804L2419 837M2417 849L2422 878L2427 887L2436 919L2426 937L2431 948L2423 973M2419 988L2426 1012L2419 1037L2422 1050L2415 1078M2416 1097M2419 1118L2419 1131M2422 1151M2429 1174M2447 335L2448 357M2452 378L2443 404L2445 420L2442 442L2433 472L2437 497L2445 509M2438 534M2441 560M2450 582L2451 597L2452 624L2449 645M2443 661L2444 690L2442 707L2436 728L2440 746M2436 766M2433 784M2439 805L2444 829M2445 849L2446 875L2452 895M2447 908L2447 936L2448 950L2440 968L2442 987L2446 1011L2435 1036L2434 1056L2437 1068L2445 1092L2443 1117L2445 1134L2443 1152L2454 1178M1748 1000 L1764 998M1444 738 L1443 759M2216 637 L2241 638M1354 906 L1376 902M1292 690 L1318 692M1221 472 L1244 469M2142 610 L2168 603M1347 974 L1345 1001M1151 1122 L1151 1140M1287 410 L1314 404M1594 1106 L1591 1124M1285 1055 L1310 1056M1656 785 L1662 807M2063 902 L2084 903M2316 675 L2313 691M1395 858 L1419 851M1229 869 L1232 888M1775 785 L1767 808M1826 840 L1825 858M1887 1064 L1899 1070M1188 570 L1192 589M1685 1157 L1675 1179M2265 788 L2287 786M1764 532 L1765 557M2083 502 L2108 501M1796 596 L1801 615M2406 928 L2430 931M2346 1083 L2342 1105M2358 910 L2349 936M2240 728 L2259 727M1349 622 L1345 643M1247 723 L1267 729M1800 573 L1816 570M1702 1004 L1730 1001M1442 796 L1446 817M1535 651 L1530 674M1899 438 L1926 430M1392 621 L1395 641M2207 431 L2203 447M1896 354 L1914 352M1979 1064 L1978 1084M1831 799 L1828 822M1677 742 L1682 767M2218 979 L2239 979M2417 379 L2417 400M2349 1115 L2377 1104M1903 457 L1924 453M1451 839 L1452 857M2036 812 L2033 832M1344 1069 L1363 1060M1941 720 L1969 725M1726 943 L1742 937M1511 513 L1515 532M2210 458 L2230 456M1806 861 L1800 878M1980 640 L1997 647M1614 709 L1639 708M1578 902 L1570 930M1811 990 L1834 988M1239 774 L1262 774M1930 543 L1927 560M1899 1069 L1926 1068M1585 624 L1606 623M1558 486 L1586 489M1376 969 L1397 963M1960 984 L1987 990M1679 1154 L1694 1147M1903 606 L1900 626M1360 749 L1355 765M2029 939 L2038 955M1915 873 L1935 877M1562 962 L1586 967M2031 524 L2030 552M1798 481 L1821 478M1861 1144 L1879 1147M1232 1167 L1237 1187M1240 937 L1244 953M2187 523 L2205 523M1725 826 L1729 850M1839 789 L1860 790M1730 1002 L1747 999M1721 489 L1723 511M1889 549 L1885 564M1795 1035 L1812 1038M1931 904 L1959 907M1420 354 L1442 363M1849 836 L1848 854M1448 654 L1451 681M1176 692 L1176 716M1118 520 L1135 519M1492 769 L1511 764M1460 797 L1470 818M1250 1083 L1251 1105M1198 1010 L1201 1038M1804 615 L1805 633M2181 1134 L2177 1157M1631 438 L1633 462M1418 824 L1424 840M1372 754 L1385 753M1847 403 L1876 403M1327 1045 L1346 1050M1572 1177 L1590 1182M1156 343 L1152 364M1836 422 L1856 422M1561 785 L1579 782M2196 531 L2197 556M1704 435 L1725 432M1693 641 L1698 666M2408 1035 L2408 1052M1422 702 L1421 722M1923 933 L1924 949M1153 440 L1171 438M1667 513 L1694 520M2001 572 L2005 595M1432 467 L1450 463M1486 712 L1484 737M1567 613 L1586 620M1930 353 L1953 350M1637 1087 L1637 1102M1131 680 L1148 683M1260 1112 L1279 1112M1861 904 L1859 924M1789 889 L1809 886M2108 850 L2112 872M1457 450 L1462 474M1703 346 L1729 350M1432 469 L1451 466M1191 400 L1211 398M1568 916 L1584 915M1324 457 L1349 464M1546 1127 L1566 1135M1664 645 L1684 646M2168 449 L2164 473M1487 794 L1493 819M1933 1156 L1960 1152M1725 430 L1746 440M1649 1157 L1679 1154M1954 639 L1980 636M1869 914 L1887 916M2088 537 L2089 559M1467 777 L1461 797M2280 819 L2280 838M2351 742 L2341 765M1909 653 L1904 667M1677 665 L1672 680M2067 1156 L2068 1176M2030 832 L2025 854M1822 632 L1816 654M1753 590 L1775 592M1118 498 L1138 502M1403 1113 L1403 1137M1371 334 L1369 362M2047 426 L2072 437M2161 533 L2186 525M2054 1024 L2073 1028M1846 1080 L1864 1087M1525 970 L1522 990M1935 483 L1938 504M2219 689 L2237 684M2201 651 L2210 675M2136 886 L2138 903M1417 516 L1417 536M1693 561 L1720 564M2128 359 L2152 352M1623 546 L1621 567M1757 435 L1759 449M1734 591 L1753 589M1332 810 L1335 836M1565 809 L1583 808M1135 1006 L1130 1029M2038 517 L2069 522M1216 535 L1243 534M1682 571 L1681 593M2397 597 L2398 617M2206 919 L2206 943M1240 814 L1263 810M2061 546 L2077 546M2113 980 L2133 982M2201 757 L2196 778M2381 711 L2400 717M2143 553 L2163 552M2400 498 L2417 501M1327 596 L1330 617M1901 1023 L1922 1028M1575 540 L1578 564M1834 993 L1855 1000M2143 524 L2161 528M2325 370 L2345 366M1939 390 L1959 388M1173 367 L1181 386M2374 848 L2372 872M1409 831 L1434 830M1389 620 L1392 641M2259 490 L2257 503M1681 915 L1678 936M1151 1076 L1148 1096M1166 640 L1187 635M1500 876 L1497 903M1408 1036 L1428 1039M1784 357 L1810 367M1362 633 L1378 627M2269 711 L2271 737M1572 649 L1570 672M1850 532 L1849 553M2293 768 L2315 770M2230 1083 L2247 1089M1558 676 L1578 683M1525 405 L1531 426M1353 982 L1372 982M1569 775 L1573 798M1480 647 L1499 640M2024 692 L2046 694M1859 370 L1861 394M1471 426 L1490 420M2052 595 L2053 624M1134 794 L1124 820M1659 409 L1682 413M2416 577 L2420 599M1346 683 L1346 699M2105 570 L2116 570M1280 1073 L1309 1070M1365 687 L1363 700M2435 379 L2433 401M1809 402 L1833 404M1566 734 L1571 751M1656 915 L1663 937M1994 378 L1994 399M1869 570 L1861 588M2352 371 L2353 393M2184 988 L2180 1007M1202 514 L1215 515M2190 923 L2193 941M1864 551 L1865 572M2175 534 L2180 556M1580 564 L1580 589M1503 908 L1527 911M2269 517 L2290 512M1879 1149 L1898 1160M2203 447 L2201 471M1117 805 L1134 813M2041 789 L2034 811M2028 336 L2033 352M1636 401 L1659 408M1260 495 L1285 497M2013 737 L2033 734M1849 553 L1846 577M1863 500 L1881 499M1869 915 L1887 918M2334 694 L2333 716M1389 952 L1382 975M1409 345 L1411 359M1585 419 L1586 439M1391 832 L1409 830M1397 1027 L1396 1045M1515 495 L1541 495M2397 375 L2392 399M1563 693 L1559 708M1706 696 L1724 699M1347 520 L1368 523M2309 1109 L2334 1111M1491 1020 L1510 1017M1760 1008 L1758 1025M1933 1156 L1959 1155M2329 1014 L2322 1040M1358 673 L1381 678M1657 1087 L1659 1099M2383 1033 L2383 1056M1266 901 L1290 898M2438 354 L2436 379M2219 1030 L2215 1054M1759 406 L1758 435M2159 1130 L2153 1155M1530 488 L1530 504M2153 463 L2178 460M1358 674 L1381 679M2169 1121 L2188 1130M1716 404 L1716 422M1475 675 L1470 695M2088 698 L2110 695M1481 760 L1482 775M1565 460 L1577 479M1887 508 L1894 529M2352 722 L2350 742M1404 708 L1398 725M1455 726 L1475 726M2287 629 L2294 651M2340 886 L2360 888M2293 557 L2312 557M1141 1084 L1159 1084M2334 1069 L2354 1074M1334 861 L1354 864M1715 340 L1720 363M1490 345 L1486 369M1669 853 L1669 869M1315 341 L1340 341M2179 1025 L2179 1050M2309 1112 L2333 1115M2064 885 L2086 881M2435 379 L2433 401M2292 770 L2315 771M1700 666 L1696 685M1373 538 L1378 554M1538 881 L1542 901M1723 390 L1745 392M1279 397 L1278 419M1709 969 L1709 994M1195 1103 L1190 1124M1510 514 L1514 532M1455 953 L1481 951M1322 1106 L1343 1107M1808 434 L1808 452M2253 895 L2277 899M1493 923 L1491 945M1229 527 L1230 544M1889 838 L1893 863M2206 526 L2225 523M1544 1059 L1546 1075M2013 860 L2038 863M2312 1050 L2336 1048M1335 889 L1352 889M1440 668 L1461 667M1396 591 L1420 585M1398 672 L1421 675M1438 642 L1464 644M1727 535 L1728 556M1672 617 L1671 634M1241 977 L1242 998M1195 730 L1194 752M1945 742 L1965 746M1907 765 L1922 765M1347 539 L1366 545M1628 471 L1645 465M1244 1019 L1242 1042M2020 1133 L2038 1124M1407 708 L1401 724M1602 715 L1608 743M1933 673 L1933 689M2263 926 L2269 948M2314 653 L2320 677M2375 959 L2378 982M1670 707 L1672 723M1139 621 L1164 621M2289 507 L2310 512M2431 876 L2437 890M1483 667 L1501 662M1587 980 L1589 998M1765 1049 L1768 1067M1800 1056 L1820 1062M2277 594 L2300 599M1424 1093 L1425 1111M1518 932 L1545 938M1766 942 L1786 934M2065 861 L2086 854M2024 1087 L2046 1087M1624 956 L1628 981M1474 1051 L1486 1072M1316 1120 L1318 1140M1417 452 L1423 473M1222 907 L1222 932M1522 638 L1547 642M1646 1094 L1672 1090M1478 359 L1501 362M1326 681 L1321 700M1115 852 L1135 852M1777 1120 L1802 1124M2223 538 L2244 537M2170 1015 L2193 1019M2029 1139 L2033 1159M1252 786 L1255 804M2418 643 L2413 661M2189 373 L2187 391M1994 698 L2003 723M2346 966 L2369 970M1844 1059 L1867 1067M2169 1164 L2189 1168M2036 480 L2027 509M1566 614 L1586 622M1525 581 L1549 580M1590 599 L1607 595M1138 737 L1129 758M1442 931 L1462 936M1930 821 L1922 842M1246 954 L1242 977M1935 1082 L1933 1101M2234 530 L2238 551M2356 452 L2371 447M1866 411 L1874 429M1383 578 L1393 598M1323 976 L1322 1003M2013 972 L2019 997M1317 792 L1313 811M1832 726 L1854 724M1586 419 L1587 439M2044 791 L2037 812M2254 1153 L2272 1157M1558 450 L1578 449M2068 596 L2073 620M1919 549 L1937 550M2246 611 L2251 629M1985 362 L1999 369M1536 548 L1540 572M2398 980 L2395 996M2301 778 L2299 797M2254 1154 L2273 1158M1808 472 L1805 493M1283 649 L1282 676M1995 600 L2014 603M1901 667 L1911 687M1469 656 L1471 677M2095 735 L2117 736M1712 339 L1717 362M1429 1084 L1452 1086M1653 859 L1679 863M1520 876 L1519 902M2322 870 L2332 895M1419 1144 L1438 1141M1769 1091 L1765 1112M1738 340 L1738 365M2135 978 L2158 978M2224 755 L2224 774M1290 1145 L1291 1160M1481 450 L1481 470M1960 881 L1973 887M1997 644 L2022 645M1453 994 L1474 997M2203 611 L2208 633M2201 1076 L2197 1094M1132 391 L1141 412M1708 927 L1726 927M2301 1025 L2320 1025M1779 947 L1779 964M2065 862 L2086 855M1510 1040 L1537 1046M1336 636 L1362 636M2272 650 L2276 669M2196 1095 L2195 1117M1901 999 L1920 1008M2333 895 L2335 910M1327 761 L1342 761M1623 1027 L1638 1030M2122 366 L2121 391M1157 470 L1146 494M2268 511 L2289 507M1687 1156 L1678 1179M1651 763 L1655 785M1407 997 L1437 1001M1581 528 L1578 539M2035 769 L2040 789M1569 830 L1587 836M1721 674 L1745 675M1518 612 L1512 629M1642 770 L1669 772M1917 615 L1937 617M2153 858 L2159 884M2251 582 L2275 577M1560 1085 L1582 1097M2117 732 L2139 733M2314 415 L2311 441M1322 1107 L1343 1107M1813 1070 L1808 1092M2127 559 L2127 582M2086 852 L2100 857M1260 1070 L1280 1071M2105 1033 L2101 1050M1856 812 L1884 808M2052 814 L2048 834M2409 1168 L2426 1163M1926 431 L1943 432M1727 1139 L1724 1160M1833 798 L1831 823M1654 1041 L1658 1062M1780 964 L1777 984M1185 616 L1206 614M1736 1028 L1742 1046M1676 937 L1671 957M1919 534 L1939 537M1314 485 L1312 513M1294 922 L1315 925M1455 730 L1475 730M1584 944 L1606 949M2335 1067 L2354 1073M1993 752 L2008 754M1685 653 L1706 659M1725 788 L1721 812M1607 760 L1610 782M2379 460 L2386 481M1822 982 L1820 1001M1286 934 L1291 961M2127 686 L2129 699M1835 652 L1845 675M1273 1064 L1272 1081M1933 439 L1935 464M1630 1172 L1652 1175M2301 823 L2300 841M1342 1133 L1346 1159M1818 654 L1824 678M1232 736 L1233 760M1969 1051 L1991 1051M1179 609 L1177 625M2335 588 L2339 608M1219 357 L1219 384M1239 816 L1263 812M1723 770 L1721 787M2052 1064 L2067 1063M1169 1160 L1167 1186M2104 651 L2135 652M1732 818 L1760 823M1486 584 L1510 587M1123 443 L1153 440M1390 528 L1408 525M2260 1054 L2260 1081M1812 639 L1830 641M2127 893 L2149 894M1754 1128 L1777 1117M1861 1107 L1884 1099M2302 938 L2323 945M1440 979 L1452 972M1484 495 L1489 514M1464 1002 L1460 1029M1777 413 L1785 436M1314 922 L1339 924M2244 1160 L2251 1187M1719 1110 L1735 1104M1203 1178 L1223 1179M2190 941 L2192 964M1341 1092 L1369 1083M2363 1161 L2379 1155M1299 397 L1301 417M1627 695 L1628 716M2310 590 L2316 608M1606 1039 L1606 1061M1607 1039 L1608 1061M2427 652 L2446 652M2183 1027 L2185 1050M1780 346 L1773 363M1838 1012 L1855 1019M1203 893 L1224 896M1407 993 L1437 998M1611 636 L1615 653M1693 561 L1720 565M1252 1033 L1264 1029M1236 837 L1259 833M1481 935 L1499 932M2140 1101 L2166 1102M2293 627 L2299 651M1290 1177 L1306 1174M1896 528 L1886 549M1441 477 L1434 495M2247 345 L2252 362M2198 556 L2201 570M1762 408 L1763 435M1526 467 L1532 489M1882 520 L1906 516M1611 872 L1633 878M1763 449 L1768 472M1735 593 L1753 590M1725 872 L1724 888M1955 622 L1975 614M2282 673 L2307 679M1379 849 L1383 869M2419 1125 L2444 1126M1387 619 L1390 640M1351 331 L1346 354M1202 532 L1216 534M2239 722 L2258 722M2200 400 L2220 398M2396 850 L2394 870M1411 1055 L1425 1057M1606 789 L1627 797M1567 1057 L1568 1081M1678 936 L1674 956M2127 745 L2125 767M2152 999 L2174 995M1869 840 L1867 858M1769 496 L1768 519M2312 1072 L2334 1071M1956 1045 L1956 1059M1831 1094 L1828 1111M2248 1087 L2271 1092M2099 1120 L2125 1125M1118 540 L1135 538M1874 749 L1869 778M1285 703 L1280 720M2319 676 L2316 692M1192 902 L1199 924M1693 423 L1699 447M2024 1015 L2021 1045M1971 523 L1971 547M1689 580 L1716 590M1863 765 L1881 762M1652 1020 L1657 1040M2397 473 L2419 471M2277 798 L2283 821M1220 907 L1221 930M2073 911 L2075 930M1707 554 L1706 574M2394 359 L2392 373M1224 505 L1227 527M2252 479 L2271 475M1318 398 L1324 417M2154 559 L2154 583M1140 990 L1136 1006M1839 1148 L1861 1149M1788 1093 L1790 1111M1182 872 L1199 876M1391 799 L1415 794M1549 580 L1565 579M1323 474 L1345 482M1253 1065 L1246 1084M1415 795 L1431 792M2057 855 L2053 872M1326 976 L1323 1003M1462 1148 L1482 1150M2121 1073 L2113 1089M1551 893 L1571 891M1305 781 L1326 782M1231 634 L1248 644M2425 1159 L2446 1161M2095 640 L2093 665M1774 854 L1795 853M1307 836 L1325 840M1789 687 L1810 691M2261 964 L2279 961M1170 1076 L1166 1098M2145 725 L2145 740M1639 363 L1658 362M1797 675 L1797 699M2242 622 L2258 611M1562 400 L1568 419M2151 1093 L2150 1109M1532 981 L1553 982M1365 460 L1389 459M2199 663 L2218 665M1219 573 L1245 574M1833 691 L1853 680M1746 596 L1744 618M2283 1127 L2277 1149M2038 993 L2046 1016M1639 1161 L1637 1188M1992 747 L2010 752M2144 1009 L2147 1026M1258 1093 L1280 1097M1738 744 L1744 771M1896 677 L1918 678M1393 985 L1414 978M2212 476 L2231 477M1501 694 L1502 714M1166 373 L1185 375M1423 1162 L1441 1160M1341 942 L1361 938" fill="none" stroke="#dde3ea" stroke-width="2.200" stroke-linejoin="round"/><path d="M1178 808L1197 816 1228 819 1248 808 1269 794 1286 780 1300 788 1317 763 1341 746 1362 734 1370 727 1382 734 1396 756 1408 773 1409 797 1401 821 1396 833 1394 866 1365 866 1334 859 1328 863 1245 865 1211 859 1194 839 1182 821ZM1334 825L1352 839 1379 815 1389 797 1390 777 1379 758 1369 747 1348 760 1328 779 1315 797 1303 811 1321 815Z" fill="#cdeed8" fill-rule="evenodd"/><path d="M1322 717L1334 712 1348 724 1348 737 1334 744 1322 736Z" fill="#cdeed8"/><path d="M1348 873L1365 866 1394 866 1388 883 1381 897 1382 925 1389 955 1403 964 1424 973 1451 981 1472 985 1486 979 1513 981 1520 990 1540 997 1547 1007 1520 1009 1486 1007 1472 1017 1451 1029 1444 1014 1437 1004 1410 1000 1382 983 1369 966 1348 955 1338 931 1340 900Z" fill="#cdeed8"/><path d="M1486 981L1506 979 1520 990 1540 995 1549 1007 1589 1007 1599 1017 1601 1038 1606 1052 1602 1072 1616 1093 1619 1107 1599 1110 1568 1120 1566 1103 1527 1103 1520 1072 1518 1048 1499 1045 1486 1024 1484 1004Z" fill="#cdeed8"/><path d="M1446 1004L1472 1004 1472 1024 1451 1033Z" fill="#cdeed8"/><path d="M1480 1034L1489 1034 1487 1052 1480 1052Z" fill="#cdeed8"/><path d="M1539 967L1554 966 1554 1004 1540 1004Z" fill="#cdeed8"/><path d="M1616 962L1650 966 1649 1004 1637 1024 1616 1031 1602 1017 1616 990Z" fill="#cdeed8"/><path d="M1647 928L1678 914 1705 918 1719 935 1712 952 1692 962 1678 969 1674 1004 1664 1031 1650 1031 1654 986 1647 955Z" fill="#cdeed8"/><path d="M1705 875L1726 875 1726 887 1747 888 1745 900 1692 900 1692 890 1705 888Z" fill="#cdeed8"/><path d="M1688 851L1705 850 1705 861 1689 862Z" fill="#cdeed8"/><path d="M1705 921L1747 931 1760 945 1757 969 1726 969 1709 955Z" fill="#cdeed8"/><path d="M1702 986L1726 990 1729 1004 1757 1004 1764 1017 1760 1034 1774 1052 1774 1065 1740 1065 1733 1052 1712 1038 1705 1010Z" fill="#cdeed8"/><path d="M1171 900L1187 894 1188 899 1176 907Z" fill="#cdeed8"/><path d="M1559 708L1582 705 1583 718 1563 724Z" fill="#cdeed8"/><path d="M1413 693L1427 689 1431 715 1420 718Z" fill="#cdeed8"/><path d="M1187 763L1202 760 1204 780 1190 784Z" fill="#cdeed8"/><path d="M2013 366L2071 366 2071 412 2013 412Z" fill="#cdeed8"/><path d="M2261 473L2285 470 2287 502 2262 505Z" fill="#cdeed8"/><path d="M2334 476L2351 474 2352 486 2335 488Z" fill="#cdeed8"/><path d="M2348 519L2366 517 2366 531 2349 533Z" fill="#cdeed8"/><path d="M2220 819L2257 817 2257 840 2221 842Z" fill="#cdeed8"/><path d="M2013 908L2029 908 2029 924 2013 924Z" fill="#cdeed8"/><path d="M2066 778L2084 778 2084 791 2066 791Z" fill="#cdeed8"/><path d="M1228 548L1240 545 1243 568 1231 571Z" fill="#cdeed8"/><path d="M1538 545L1552 540 1556 552 1542 558Z" fill="#cdeed8"/><path d="M1186 585L1213 588 1208 604 1190 600Z" fill="#cdeed8"/><path d="M1852 1095L1868 1095 1868 1110 1852 1110Z" fill="#cdeed8"/><path d="M2168 985L2178 985 2178 1010 2168 1010Z" fill="#cdeed8"/><path d="M2322 1050L2330 1050 2332 1090 2324 1090Z" fill="#cdeed8"/><path d="M1866 860L1878 860 1878 878 1866 878Z" fill="#cdeed8"/><path d="M1142 681C1145 681 1156 683 1163 685C1169 687 1177 689 1183 693C1189 697 1197 702 1197 708C1197 714 1187 721 1183 729C1180 737 1177 746 1176 756C1176 766 1179 785 1180 791" fill="none" stroke="#9ad6b2" stroke-width="1.200"/><path d="M1187 763C1190 764 1202 766 1204 770C1206 773 1203 782 1200 784C1198 785 1191 784 1188 780C1186 777 1187 766 1187 763" fill="none" stroke="#9ad6b2" stroke-width="1.200"/><path d="M1362 681C1365 681 1377 683 1382 686C1388 689 1396 697 1396 698C1396 699 1385 692 1382 691" fill="none" stroke="#9ad6b2" stroke-width="1.200"/><path d="M1413 694C1416 696 1426 701 1427 705C1429 709 1423 716 1422 718" fill="none" stroke="#9ad6b2" stroke-width="1.200"/><path d="M1558 712C1561 711 1571 707 1575 708C1578 709 1580 716 1578 718C1577 721 1568 723 1565 722C1561 721 1560 713 1559 712" fill="none" stroke="#9ad6b2" stroke-width="1.200"/><path d="M2087 600C2096 599 2128 605 2140 596C2152 587 2135 552 2160 548C2185 544 2243 564 2290 572C2337 580 2415 594 2440 598" fill="none" stroke="#9ad6b2" stroke-width="1.200"/><path d="M1647 921C1652 919 1668 911 1678 909C1688 907 1696 908 1705 911C1715 913 1724 919 1733 923C1742 927 1752 930 1760 937C1768 943 1776 953 1782 962C1788 971 1793 981 1796 990C1800 999 1804 1013 1805 1017" fill="none" stroke="#9ad6b2" stroke-width="1.200"/><path d="M1657 935C1660 937 1670 941 1671 945C1672 949 1666 958 1664 959C1662 959 1658 950 1657 949" fill="none" stroke="#9ad6b2" stroke-width="1.200"/><path d="M1712 1004C1716 1003 1726 999 1733 1000C1740 1001 1749 1005 1753 1010C1757 1016 1759 1026 1757 1031C1755 1036 1746 1041 1740 1041C1733 1041 1724 1037 1719 1031C1715 1025 1713 1008 1712 1004" fill="none" stroke="#9ad6b2" stroke-width="1.200"/><path d="M1781 1058C1783 1061 1791 1069 1795 1072C1799 1075 1803 1075 1805 1076" fill="none" stroke="#9ad6b2" stroke-width="1.200"/><path d="M1499 990C1502 989 1508 985 1513 986C1518 988 1526 997 1527 1000C1528 1004 1521 1006 1520 1007" fill="none" stroke="#9ad6b2" stroke-width="1.200"/><path d="M1451 1007C1453 1008 1463 1008 1465 1010C1467 1013 1462 1022 1461 1024" fill="none" stroke="#9ad6b2" stroke-width="1.200"/><path d="M1142 687C1145 688 1156 689 1163 691C1169 693 1178 694 1183 698C1188 701 1194 706 1194 712C1193 717 1183 721 1180 729C1177 736 1175 746 1175 756C1174 766 1176 781 1178 791C1180 800 1182 806 1187 811C1191 816 1194 821 1204 821C1214 821 1232 816 1245 811C1258 807 1269 800 1279 794C1290 788 1300 783 1307 777C1314 771 1314 766 1321 760C1328 754 1340 745 1348 741C1356 736 1363 734 1369 734C1374 734 1378 736 1382 742C1387 748 1394 761 1398 770C1402 779 1405 788 1405 797C1405 807 1400 818 1398 825C1396 832 1394 832 1391 839C1388 846 1382 858 1379 866C1376 874 1374 878 1372 887C1371 896 1370 910 1370 921C1371 933 1372 948 1376 955C1379 963 1382 962 1389 966C1396 970 1407 974 1417 979C1427 985 1440 992 1451 997C1463 1001 1474 1004 1486 1007C1497 1010 1510 1011 1520 1014C1530 1017 1540 1019 1547 1024C1555 1029 1558 1036 1565 1045C1571 1053 1577 1069 1585 1076C1594 1082 1607 1083 1616 1083C1625 1082 1632 1080 1637 1072C1642 1065 1644 1052 1647 1038C1650 1024 1654 1004 1654 990C1654 976 1651 966 1649 955C1647 945 1642 935 1642 928C1642 921 1644 919 1650 916C1656 913 1669 911 1678 911C1687 910 1696 910 1705 912C1715 915 1724 920 1733 925C1742 929 1752 932 1760 938C1768 945 1775 954 1781 962C1787 971 1791 981 1795 990C1798 999 1802 1010 1803 1017C1805 1024 1799 1028 1805 1031C1811 1034 1836 1034 1842 1034" fill="none" stroke="#a9daf3" stroke-width="2.600"/><path d="M1650 916C1655 915 1669 911 1678 911C1687 910 1696 910 1705 912C1715 915 1724 920 1733 925C1742 929 1756 936 1760 938" fill="none" stroke="#a9daf3" stroke-width="5"/><path d="M1842 1032C1852 1031 1880 1030 1900 1025C1920 1020 1937 1015 1960 1000C1983 985 2017 953 2040 935C2063 917 2078 902 2100 890C2122 878 2159 867 2171 862" fill="none" stroke="#a9daf3" stroke-width="2.800"/><path d="M2171 862C2184 859 2224 852 2250 845C2276 838 2293 829 2325 822C2357 815 2421 806 2440 803" fill="none" stroke="#a9daf3" stroke-width="4.500"/><path d="M1142 450C1152 454 1188 468 1202 476C1216 484 1220 489 1229 495C1238 501 1241 501 1254 510C1267 519 1286 534 1309 548C1332 562 1367 582 1390 594C1413 606 1429 612 1447 620C1465 628 1476 635 1499 643C1522 651 1550 660 1583 666C1616 672 1647 674 1700 676C1753 678 1836 677 1900 677C1964 677 2032 676 2087 676C2142 676 2182 675 2227 674C2272 673 2318 668 2354 668C2390 668 2426 672 2440 673" fill="none" stroke="#d6dce4" stroke-width="8" stroke-linecap="round" stroke-linejoin="round"/><path d="M1457 362C1458 372 1461 404 1462 420C1463 436 1466 443 1465 461C1464 479 1460 504 1456 528C1452 552 1441 589 1440 608C1439 627 1442 631 1452 640C1462 649 1488 649 1499 660C1510 671 1510 692 1516 705C1522 718 1531 728 1537 739C1543 750 1549 767 1551 773" fill="none" stroke="#d6dce4" stroke-width="6" stroke-linecap="round" stroke-linejoin="round"/><path d="M1142 870C1153 869 1188 868 1211 868C1234 867 1259 868 1279 866C1300 865 1320 863 1334 859C1349 856 1355 850 1365 846C1376 841 1382 838 1396 835C1411 832 1434 831 1451 828C1468 826 1489 824 1499 821C1509 819 1505 818 1511 813C1518 808 1528 798 1537 791C1546 783 1554 773 1565 766C1575 760 1588 757 1599 753C1610 749 1620 745 1630 742C1640 740 1647 739 1657 737C1668 736 1674 735 1692 734C1709 732 1735 730 1760 729C1785 727 1828 726 1842 725" fill="none" stroke="#d6dce4" stroke-width="9" stroke-linecap="round" stroke-linejoin="round"/><path d="M1334 859C1332 863 1321 867 1317 880C1314 892 1315 914 1314 935C1313 955 1312 981 1310 1004C1309 1026 1306 1046 1303 1072C1301 1098 1295 1146 1293 1160" fill="none" stroke="#d6dce4" stroke-width="5" stroke-linecap="round" stroke-linejoin="round"/><path d="M1142 993C1153 998 1188 1012 1211 1024C1234 1036 1257 1050 1279 1065C1302 1080 1328 1098 1348 1113C1369 1129 1394 1152 1403 1160" fill="none" stroke="#d6dce4" stroke-width="8" stroke-linecap="round" stroke-linejoin="round"/><path d="M1142 1017C1151 1021 1175 1027 1194 1038C1212 1049 1236 1067 1255 1083C1274 1099 1295 1121 1307 1134C1319 1147 1324 1156 1328 1160" fill="none" stroke="#d6dce4" stroke-width="5" stroke-linecap="round" stroke-linejoin="round"/><path d="M1520 1160C1528 1156 1554 1142 1571 1134C1589 1126 1606 1119 1623 1113C1640 1108 1654 1106 1671 1103C1688 1100 1705 1097 1726 1096C1747 1096 1775 1099 1795 1100C1814 1101 1826 1105 1842 1103C1858 1101 1869 1094 1893 1088C1917 1082 1955 1078 1985 1069C2015 1060 2041 1046 2072 1035C2103 1024 2148 1008 2171 1001C2194 994 2183 998 2211 996C2239 994 2300 991 2338 989C2376 987 2423 983 2440 982" fill="none" stroke="#d6dce4" stroke-width="9" stroke-linecap="round" stroke-linejoin="round"/><path d="M1589 773C1587 782 1578 804 1577 825C1575 846 1579 876 1580 900C1581 925 1579 952 1580 969C1581 986 1581 995 1585 1004C1589 1012 1599 1012 1602 1021C1605 1029 1601 1041 1604 1055C1607 1069 1616 1086 1619 1103C1623 1121 1622 1151 1623 1160" fill="none" stroke="#d6dce4" stroke-width="6" stroke-linecap="round" stroke-linejoin="round"/><path d="M1637 852C1636 858 1626 873 1630 887C1633 900 1651 921 1657 935C1664 949 1668 958 1668 969C1668 981 1659 998 1657 1004" fill="none" stroke="#d6dce4" stroke-width="4" stroke-linecap="round" stroke-linejoin="round"/><path d="M1795 811C1789 823 1772 860 1760 883C1749 907 1739 929 1726 952C1713 975 1697 1001 1685 1024C1672 1047 1661 1070 1650 1089C1640 1109 1628 1132 1623 1141" fill="none" stroke="#d6dce4" stroke-width="4.5" stroke-linecap="round" stroke-linejoin="round"/><path d="M2132 362C2132 368 2131 376 2132 401C2133 426 2135 494 2136 513" fill="none" stroke="#d6dce4" stroke-width="7" stroke-linecap="round" stroke-linejoin="round"/><path d="M2136 513C2139 512 2129 508 2155 510C2181 512 2242 520 2290 528C2338 536 2415 555 2440 560" fill="none" stroke="#d6dce4" stroke-width="8" stroke-linecap="round" stroke-linejoin="round"/><path d="M2136 513C2142 521 2166 540 2175 559C2184 578 2186 602 2187 628C2188 654 2175 693 2178 715C2181 737 2198 741 2204 760C2210 779 2215 805 2217 831C2219 857 2213 880 2214 915C2215 950 2220 997 2223 1038C2226 1079 2231 1140 2233 1160" fill="none" stroke="#d6dce4" stroke-width="7" stroke-linecap="round" stroke-linejoin="round"/><path d="M2136 513C2134 522 2132 552 2126 565C2120 578 2110 586 2103 591C2096 596 2090 595 2087 596" fill="none" stroke="#d6dce4" stroke-width="6" stroke-linecap="round" stroke-linejoin="round"/><path d="M2305 362C2306 378 2311 439 2308 461C2305 483 2288 478 2285 496C2282 514 2294 554 2290 571C2286 588 2267 584 2262 600C2257 616 2263 643 2262 666C2261 689 2256 728 2255 740" fill="none" stroke="#d6dce4" stroke-width="4.5" stroke-linecap="round" stroke-linejoin="round"/><path d="M1914 958C1931 955 1984 950 2016 939C2048 928 2087 899 2109 890C2131 881 2142 885 2149 884" fill="none" stroke="#d6dce4" stroke-width="5" stroke-linecap="round" stroke-linejoin="round"/><path d="M2341 877C2338 882 2333 894 2325 908C2317 922 2298 942 2294 958C2290 974 2297 988 2301 1007C2305 1026 2310 1057 2319 1075C2328 1093 2345 1101 2356 1115C2367 1129 2382 1152 2387 1160" fill="none" stroke="#d6dce4" stroke-width="4" stroke-linecap="round" stroke-linejoin="round"/><path d="M2130 890C2130 902 2133 940 2133 960C2133 980 2132 1002 2132 1010" fill="none" stroke="#d6dce4" stroke-width="4" stroke-linecap="round" stroke-linejoin="round"/><path d="M1880 760C1893 767 1933 785 1960 800C1987 815 2017 837 2040 850C2063 863 2090 875 2100 880" fill="none" stroke="#d6dce4" stroke-width="4" stroke-linecap="round" stroke-linejoin="round"/><path d="M1620 362C1623 372 1633 402 1640 420C1647 438 1652 459 1660 470C1668 481 1685 482 1690 484" fill="none" stroke="#d6dce4" stroke-width="4" stroke-linecap="round" stroke-linejoin="round"/><path d="M1930 1069C1928 1076 1921 1095 1920 1110C1919 1125 1924 1152 1925 1160" fill="none" stroke="#d6dce4" stroke-width="4" stroke-linecap="round" stroke-linejoin="round"/><path d="M1880 362C1881 373 1886 410 1888 430C1890 450 1891 456 1890 484C1889 512 1886 558 1884 600C1882 642 1877 709 1876 736C1875 763 1874 741 1876 760C1878 779 1881 824 1885 850C1889 876 1892 889 1898 914C1904 939 1914 974 1920 1000C1926 1026 1933 1042 1936 1069C1939 1096 1938 1145 1939 1160" fill="none" stroke="#8ea3c3" stroke-width="13" stroke-linecap="round" stroke-linejoin="round"/><path d="M1142 469C1170 468 1260 466 1310 465C1360 464 1397 462 1440 460C1483 458 1531 456 1570 454C1609 452 1637 451 1675 450C1713 449 1753 450 1800 449C1847 448 1914 444 1958 441C2002 438 2030 436 2065 434C2100 432 2104 430 2166 429C2228 428 2394 426 2440 425" fill="none" stroke="#9e9e9e" stroke-width="7.500"/><path d="M1142 469C1170 468 1260 466 1310 465C1360 464 1397 462 1440 460C1483 458 1531 456 1570 454C1609 452 1637 451 1675 450C1713 449 1753 450 1800 449C1847 448 1914 444 1958 441C2002 438 2030 436 2065 434C2100 432 2104 430 2166 429C2228 428 2394 426 2440 425" fill="none" stroke="#dfe2e7" stroke-width="5.500" stroke-dasharray="40 40"/><path d="M1142 475C1154 478 1197 490 1216 496C1235 502 1238 501 1254 510C1270 519 1286 534 1309 548C1332 562 1367 582 1390 594C1413 606 1429 612 1447 620C1465 628 1476 635 1499 643C1522 651 1550 660 1583 666C1616 672 1647 674 1700 676C1753 678 1836 676 1900 676C1964 676 2032 676 2087 675C2142 674 2182 674 2227 673C2272 672 2318 667 2354 667C2390 667 2426 671 2440 672" fill="none" stroke="#1a1a1a" stroke-width="1.9" stroke-linejoin="round"/><path d="M2354 667C2351 670 2342 676 2338 684C2334 692 2333 702 2333 715C2333 728 2337 747 2339 760C2341 773 2344 780 2344 791C2344 802 2341 816 2338 825C2335 834 2351 836 2325 843C2299 850 2211 859 2180 867C2149 875 2150 882 2137 890C2124 898 2108 905 2100 918C2092 931 2092 953 2087 970C2082 987 2078 1008 2072 1020C2066 1032 2056 1040 2050 1045C2044 1050 2052 1045 2038 1049C2024 1053 1979 1067 1967 1071" fill="none" stroke="#1a1a1a" stroke-width="1.9" stroke-linejoin="round"/><path d="M2440 368C2425 377 2370 414 2348 424C2326 434 2338 428 2308 430C2278 432 2190 433 2166 434" fill="none" stroke="#1a1a1a" stroke-width="1.9" stroke-linejoin="round"/><path d="M1142 1107C1159 1111 1215 1125 1245 1134C1275 1143 1311 1156 1324 1160" fill="none" stroke="#1a1a1a" stroke-width="1.9" stroke-linejoin="round"/><path d="M1964 405L1966 450M1968 470L2030 478L2034 500M2030 745L2115 735L2150 760L2170 820L2180 870M1990 965L1995 1040L2010 1100L2020 1160M2330 1130L2380 1080L2440 1040" fill="none" stroke="#8a8f96" stroke-width="1.400" stroke-dasharray="8 6"/><path d="M1215.5 495 L1223.5 481.5 L1234.5 481.5 L1242.5 495 L1234.5 508.5 L1223.5 508.5Z" fill="#4a76c4"/><text x="1229" y="502" font-size="20" font-weight="bold" fill="#fff" text-anchor="middle">4</text><path d="M1479.0 705 L1487.0 691.5 L1519.0 691.5 L1527.0 705 L1519.0 718.5 L1487.0 718.5Z" fill="#4a76c4"/><text x="1503" y="712" font-size="20" font-weight="bold" fill="#fff" text-anchor="middle">427</text><path d="M1495.5 814 L1503.5 800.5 L1514.5 800.5 L1522.5 814 L1514.5 827.5 L1503.5 827.5Z" fill="#4a76c4"/><text x="1509" y="821" font-size="20" font-weight="bold" fill="#fff" text-anchor="middle">7</text><path d="M1556.0 968 L1564.0 954.5 L1596.0 954.5 L1604.0 968 L1596.0 981.5 L1564.0 981.5Z" fill="#4a76c4"/><text x="1580" y="975" font-size="20" font-weight="bold" fill="#fff" text-anchor="middle">427</text><path d="M1634.0 1067 L1642.0 1053.5 L1674.0 1053.5 L1682.0 1067 L1674.0 1080.5 L1642.0 1080.5Z" fill="#4a76c4"/><text x="1658" y="1074" font-size="20" font-weight="bold" fill="#fff" text-anchor="middle">428</text><path d="M1653.5 1106 L1661.5 1092.5 L1682.5 1092.5 L1690.5 1106 L1682.5 1119.5 L1661.5 1119.5Z" fill="#4a76c4"/><text x="1672" y="1113" font-size="20" font-weight="bold" fill="#fff" text-anchor="middle">14</text><path d="M2188.0 805 L2196.0 791.5 L2228.0 791.5 L2236.0 805 L2228.0 818.5 L2196.0 818.5Z" fill="#4a76c4"/><text x="2212" y="812" font-size="20" font-weight="bold" fill="#fff" text-anchor="middle">420</text><path d="M1872.0 926 L1880.0 912.5 L1912.0 912.5 L1920.0 926 L1912.0 939.5 L1880.0 939.5Z" fill="#4a76c4"/><text x="1896" y="933" font-size="20" font-weight="bold" fill="#fff" text-anchor="middle">318</text><path d="M2210.5 996 L2218.5 982.5 L2239.5 982.5 L2247.5 996 L2239.5 1009.5 L2218.5 1009.5Z" fill="#4a76c4"/><text x="2229" y="1003" font-size="20" font-weight="bold" fill="#fff" text-anchor="middle">14</text><path d="M1627.5 737 L1635.5 723.5 L1646.5 723.5 L1654.5 737 L1646.5 750.5 L1635.5 750.5Z" fill="#4a76c4"/><text x="1641" y="744" font-size="20" font-weight="bold" fill="#fff" text-anchor="middle">7</text><text x="1245" y="388" font-size="27" fill="#5b7383" font-weight="normal" text-anchor="start" stroke="#fff" stroke-width="6" stroke-linejoin="round" paint-order="stroke">阿佐ヶ谷神明宮</text><text x="1643" y="386" font-size="25" fill="#4c5763" font-weight="normal" text-anchor="start" stroke="#fff" stroke-width="6" stroke-linejoin="round" paint-order="stroke">高円寺北</text><text x="1312" y="474" font-size="23" fill="#333" font-weight="normal" text-anchor="start" stroke="#fff" stroke-width="6" stroke-linejoin="round" paint-order="stroke" transform="rotate(-3 1312 474)">中央東線</text><rect x="1440" y="448" width="25" height="25" rx="5" fill="#fff"/><text x="1452.5" y="465.5" font-size="14" font-weight="bold" font-style="italic" fill="#2f8f4a" text-anchor="middle">JR</text><text x="1468" y="470" font-size="26" text-anchor="start" fill="#fff" stroke="#fff" stroke-width="6" stroke-linejoin="round">阿佐ヶ谷</text><text x="1468" y="470" font-size="26" text-anchor="start" fill="#3a4a5c" stroke="#3a4a5c" stroke-width=".400">阿佐ヶ谷</text><text x="1677" y="458" font-size="26" text-anchor="start" fill="#fff" stroke="#fff" stroke-width="6" stroke-linejoin="round">高円寺</text><text x="1677" y="458" font-size="26" text-anchor="start" fill="#3a4a5c" stroke="#3a4a5c" stroke-width=".400">高円寺</text><rect x="1756" y="437" width="25" height="25" rx="5" fill="#fff"/><text x="1768.5" y="454.5" font-size="14" font-weight="bold" font-style="italic" fill="#2f8f4a" text-anchor="middle">JR</text><text x="1639" y="492" font-size="27" fill="#5b7383" font-weight="normal" text-anchor="start" stroke="#fff" stroke-width="6" stroke-linejoin="round" paint-order="stroke">馬橋稲荷神社</text><text x="1889" y="386" font-size="27" fill="#7a4fd8" font-weight="normal" text-anchor="start" stroke="#fff" stroke-width="6" stroke-linejoin="round" paint-order="stroke">イマジナス</text><text x="2039" y="400" font-size="38" text-anchor="start" fill="#fff" stroke="#fff" stroke-width="7" stroke-linejoin="round">中野区</text><text x="2039" y="400" font-size="38" text-anchor="start" fill="#2b3036" stroke="#2b3036" stroke-width=".400">中野区</text><text x="2068" y="444" font-size="26" text-anchor="start" fill="#fff" stroke="#fff" stroke-width="6" stroke-linejoin="round">中野</text><text x="2068" y="444" font-size="26" text-anchor="start" fill="#3a4a5c" stroke="#3a4a5c" stroke-width=".400">中野</text><rect x="2121" y="423" width="25" height="25" rx="5" fill="#fff"/><text x="2133.5" y="440.5" font-size="14" font-weight="bold" font-style="italic" fill="#2f8f4a" text-anchor="middle">JR</text><rect x="2149" y="427" width="17" height="17" rx="2.500" fill="#4a9bd4"/><path d="M2152.7 432.5 l3 6 l1.800 -3.500 l1.800 3.500 l3 -6" fill="none" stroke="#fff" stroke-width="1.800" stroke-linejoin="round"/><text x="2315" y="456" font-size="27" fill="#7a4fd8" font-weight="normal" text-anchor="start" stroke="#fff" stroke-width="6" stroke-linejoin="round" paint-order="stroke">なかのZERO</text><text x="1299" y="627" font-size="26" text-anchor="start" fill="#fff" stroke="#fff" stroke-width="6" stroke-linejoin="round">南阿佐ケ谷</text><text x="1299" y="627" font-size="26" text-anchor="start" fill="#3a4a5c" stroke="#3a4a5c" stroke-width=".400">南阿佐ケ谷</text><rect x="1430" y="608" width="17" height="17" rx="2.500" fill="#4a9bd4"/><path d="M1433.7 613.5 l3 6 l1.800 -3.500 l1.800 3.500 l3 -6" fill="none" stroke="#fff" stroke-width="1.800" stroke-linejoin="round"/><text x="1498" y="652" font-size="23" fill="#333" font-weight="normal" text-anchor="start" stroke="#fff" stroke-width="6" stroke-linejoin="round" paint-order="stroke" transform="rotate(17 1498 652)">東京メトロ丸ノ内線</text><text x="2127" y="683" font-size="26" text-anchor="start" fill="#fff" stroke="#fff" stroke-width="6" stroke-linejoin="round">新中野</text><text x="2127" y="683" font-size="26" text-anchor="start" fill="#3a4a5c" stroke="#3a4a5c" stroke-width=".400">新中野</text><rect x="2209" y="664" width="17" height="17" rx="2.500" fill="#4a9bd4"/><path d="M2212.7 669.5 l3 6 l1.800 -3.500 l1.800 3.500 l3 -6" fill="none" stroke="#fff" stroke-width="1.800" stroke-linejoin="round"/><text x="2399" y="695" font-size="26" text-anchor="start" fill="#fff" stroke="#fff" stroke-width="6" stroke-linejoin="round">中野坂上</text><text x="2399" y="695" font-size="26" text-anchor="start" fill="#3a4a5c" stroke="#3a4a5c" stroke-width=".400">中野坂上</text><text x="2357" y="733" font-size="27" fill="#cf3fa6" font-weight="normal" text-anchor="start" stroke="#fff" stroke-width="6" stroke-linejoin="round" paint-order="stroke">ダイワ</text><text x="1144" y="568" font-size="22" fill="#39855c" font-weight="normal" text-anchor="start" stroke="#fff" stroke-width="6" stroke-linejoin="round" paint-order="stroke">園</text><text x="1143" y="630" font-size="22" fill="#333" font-weight="normal" text-anchor="start" stroke="#fff" stroke-width="6" stroke-linejoin="round" paint-order="stroke">窪</text><text x="1170" y="853" font-size="27.5" fill="#39855c" font-weight="normal" text-anchor="start" stroke="#fff" stroke-width="6" stroke-linejoin="round" paint-order="stroke">善福寺川緑地</text><text x="1294" y="930" font-size="27.5" fill="#39855c" font-weight="normal" text-anchor="start" stroke="#fff" stroke-width="6" stroke-linejoin="round" paint-order="stroke">杉並児童</text><text x="1294" y="958" font-size="27.5" fill="#39855c" font-weight="normal" text-anchor="start" stroke="#fff" stroke-width="6" stroke-linejoin="round" paint-order="stroke">交通公園</text><text x="1501" y="1047" font-size="27.5" fill="#39855c" font-weight="normal" text-anchor="start" stroke="#fff" stroke-width="6" stroke-linejoin="round" paint-order="stroke">和田堀公園</text><text x="1377" y="1100" font-size="27.5" fill="#5b7383" font-weight="normal" text-anchor="start" stroke="#fff" stroke-width="6" stroke-linejoin="round" paint-order="stroke">大宮八幡宮</text><text x="1724" y="805" font-size="27" fill="#4a6572" font-weight="normal" text-anchor="start" stroke="#fff" stroke-width="6" stroke-linejoin="round" paint-order="stroke">妙法寺</text><text x="1737" y="1040" font-size="27" fill="#2f73e0" font-weight="normal" text-anchor="start" stroke="#fff" stroke-width="6" stroke-linejoin="round" paint-order="stroke">島忠 ホームズ中野本店</text><text x="2004" y="884" font-size="25.5" text-anchor="start" fill="#fff" stroke="#fff" stroke-width="6" stroke-linejoin="round">中野富士見町</text><text x="2004" y="884" font-size="25.5" text-anchor="start" fill="#3a4a5c" stroke="#3a4a5c" stroke-width=".400">中野富士見町</text><rect x="2162" y="865" width="17" height="17" rx="2.500" fill="#4a9bd4"/><path d="M2165.7 870.5 l3 6 l1.800 -3.500 l1.800 3.500 l3 -6" fill="none" stroke="#fff" stroke-width="1.800" stroke-linejoin="round"/><text x="1860" y="1085" font-size="25.5" text-anchor="start" fill="#fff" stroke="#fff" stroke-width="6" stroke-linejoin="round">方南町</text><text x="1860" y="1085" font-size="25.5" text-anchor="start" fill="#3a4a5c" stroke="#3a4a5c" stroke-width=".400">方南町</text><rect x="1941" y="1067" width="17" height="17" rx="2.500" fill="#4a9bd4"/><path d="M1944.7 1072.5 l3 6 l1.800 -3.500 l1.800 3.500 l3 -6" fill="none" stroke="#fff" stroke-width="1.800" stroke-linejoin="round"/><rect x="2333" y="808" width="17" height="17" rx="2.500" fill="#4a9bd4"/><path d="M2336.7 813.5 l3 6 l1.800 -3.500 l1.800 3.500 l3 -6" fill="none" stroke="#fff" stroke-width="1.800" stroke-linejoin="round"/><text x="1929" y="966" font-size="23" fill="#333" font-weight="normal" text-anchor="start" stroke="#fff" stroke-width="6" stroke-linejoin="round" paint-order="stroke" transform="rotate(-11 1929 966)">本郷通り</text><text x="2298" y="1012" font-size="21" fill="#333" font-weight="normal" text-anchor="start" stroke="#fff" stroke-width="6" stroke-linejoin="round" paint-order="stroke" transform="rotate(78 2298 1012)">柳通り</text><text x="2420" y="1072" font-size="24" fill="#7a4fd8" font-weight="normal" text-anchor="start" stroke="#fff" stroke-width="6" stroke-linejoin="round" paint-order="stroke">京</text><text x="2420" y="1096" font-size="24" fill="#7a4fd8" font-weight="normal" text-anchor="start" stroke="#fff" stroke-width="6" stroke-linejoin="round" paint-order="stroke">ー</text><text x="1168" y="1142" font-size="24" text-anchor="start" fill="#fff" stroke="#fff" stroke-width="6" stroke-linejoin="round">浜田山</text><text x="1168" y="1142" font-size="24" text-anchor="start" fill="#3a4a5c" stroke="#3a4a5c" stroke-width=".400">浜田山</text><circle cx="1262" cy="1133" r="11" fill="#6f7f8c"/><text x="2134" y="1150" font-size="26" fill="#f5c3a0" font-weight="normal" text-anchor="start" stroke="#fff" stroke-width="0" stroke-linejoin="round" paint-order="stroke">Sunday Bake Shop</text><g transform="translate(1470 372)"><path d="M0 31 C-6 27 -23 16 -23 0 A23 23 0 1 1 23 0 C23 16 6 27 0 31Z" fill="#fff" filter="url(#ps)"/><circle r="19.500" fill="#78909c"/><path d="M-10 -9 H10 V-5 H-10Z M-8 -2 H8 V1 H-8Z M-7 -5 H-4 V10 H-7Z M4 -5 H7 V10 H4Z" fill="#fff"/></g><g transform="translate(1606 477)"><path d="M0 31 C-6 27 -23 16 -23 0 A23 23 0 1 1 23 0 C23 16 6 27 0 31Z" fill="#fff" filter="url(#ps)"/><circle r="19.500" fill="#78909c"/><path d="M-10 -9 H10 V-5 H-10Z M-8 -2 H8 V1 H-8Z M-7 -5 H-4 V10 H-7Z M4 -5 H7 V10 H4Z" fill="#fff"/></g><g transform="translate(1856 372)"><path d="M0 31 C-6 27 -23 16 -23 0 A23 23 0 1 1 23 0 C23 16 6 27 0 31Z" fill="#fff" filter="url(#ps)"/><circle r="19.500" fill="#ac7cf5"/><path d="M-10 -8 H10 V-5 H-10Z M-9 7 H9 V10 H-9Z M-7 -3 H-4.500 V5 H-7Z M-1.200 -3 H1.200 V5 H-1.200Z M4.500 -3 H7 V5 H4.500Z" fill="#fff"/></g><g transform="translate(2282 444)"><path d="M0 31 C-6 27 -23 16 -23 0 A23 23 0 1 1 23 0 C23 16 6 27 0 31Z" fill="#fff" filter="url(#ps)"/><circle r="19.500" fill="#ac7cf5"/><path d="M-8 9 V-1 H-4 V-5 H-1.500 V-10 H1.500 V-5 H4 V-1 H8 V9 H3 V3 H-3 V9Z" fill="#fff"/></g><g transform="translate(1189 555)"><path d="M0 31 C-6 27 -23 16 -23 0 A23 23 0 1 1 23 0 C23 16 6 27 0 31Z" fill="#fff" filter="url(#ps)"/><circle r="19.500" fill="#4fa574"/><path d="M0 -13 L7 -3 H4 L10 6 H2 V11 H-2 V6 H-10 L-4 -3 H-7Z" fill="#fff"/></g><g transform="translate(1366 840)"><path d="M0 31 C-6 27 -23 16 -23 0 A23 23 0 1 1 23 0 C23 16 6 27 0 31Z" fill="#fff" filter="url(#ps)"/><circle r="19.500" fill="#4fa574"/><path d="M0 -13 L7 -3 H4 L10 6 H2 V11 H-2 V6 H-10 L-4 -3 H-7Z" fill="#fff"/></g><g transform="translate(1546 1087)"><path d="M0 31 C-6 27 -23 16 -23 0 A23 23 0 1 1 23 0 C23 16 6 27 0 31Z" fill="#fff" filter="url(#ps)"/><circle r="19.500" fill="#78909c"/><path d="M-10 -9 H10 V-5 H-10Z M-8 -2 H8 V1 H-8Z M-7 -5 H-4 V10 H-7Z M4 -5 H7 V10 H4Z" fill="#fff"/></g><g transform="translate(2051 1026)"><path d="M0 31 C-6 27 -23 16 -23 0 A23 23 0 1 1 23 0 C23 16 6 27 0 31Z" fill="#fff" filter="url(#ps)"/><circle r="19.500" fill="#4a8df5"/><path d="M-9 -3 H9 L10.500 10 H-10.500Z" fill="#fff"/><path d="M-4.500 -3 V-6 A4.500 4.500 0 0 1 4.500 -6 V-3" fill="none" stroke="#fff" stroke-width="2.400"/><path d="M-4 2 A4 4 0 0 0 4 2" fill="none" stroke="#4a8df5" stroke-width="2"/></g><g transform="translate(1835 796)"><path d="M0 31 C-6 27 -23 16 -23 0 A23 23 0 1 1 23 0 C23 16 6 27 0 31Z" fill="#fff" filter="url(#ps)"/><circle r="19.500" fill="#78909c"/><path d="M-10 -9 H10 V-5 H-10Z M-8 -2 H8 V1 H-8Z M-7 -5 H-4 V10 H-7Z M4 -5 H7 V10 H4Z" fill="#fff"/></g><circle cx="2408" cy="1142" r="23" fill="#fff" filter="url(#ps)"/><circle cx="2408" cy="1142" r="19.500" fill="#f28b3c"/><path d="M2401 1130v10m-3-10v6a3 3 0 0 0 6 0v-6m-3 10v10M2414 1130c-3 2-4 6-3 10h3m0-10v20" stroke="#fff" stroke-width="1.800" fill="none"/><text x="1165" y="1143" font-size="36" letter-spacing="-.500" stroke="#fff" stroke-width="3.500" stroke-linejoin="round" fill="#fff">Google</text><text x="1165" y="1143" font-size="36" letter-spacing="-.500" stroke-width="0"><tspan fill="#4285f4" stroke="#4285f4">G</tspan><tspan fill="#ea4335" stroke="#ea4335">o</tspan><tspan fill="#fbbc05" stroke="#fbbc05">o</tspan><tspan fill="#4285f4" stroke="#4285f4">g</tspan><tspan fill="#34a853" stroke="#34a853">l</tspan><tspan fill="#ea4335" stroke="#ea4335">e</tspan></text><rect x="1590" y="1132" width="254" height="28" fill="#fff" fill-opacity=".72"/><rect x="1852" y="1132" width="256" height="28" fill="#fff" fill-opacity=".72"/><rect x="2108" y="1132" width="104" height="28" fill="#fff" fill-opacity=".72"/><rect x="2212" y="1132" width="222" height="28" fill="#fff" fill-opacity=".72"/><text y="1154" font-size="19.500" fill="#000"><tspan x="1597">キーボード ショートカット</tspan><tspan x="1864">地図データ ©2025 Google</tspan><tspan x="2121">利用規約</tspan><tspan x="2226">地図の誤りを報告する</tspan></text><g filter="url(#iw)"><rect x="1583" y="484" width="504" height="252" rx="16" fill="#fff"/><path d="M1812 735L1835 757L1858 735Z" fill="#fff"/></g><g transform="translate(1835 820)"><path d="M0 0C-2 -14 -26 -26 -26 -48.500A26 26 0 0 1 26 -48.500C26 -26 2 -14 0 0Z" fill="#dc4e3f" stroke="#b93a2d" stroke-width="2"/><circle cx="0" cy="-48.500" r="10" fill="#a52a20"/></g><path d="M1812 734L1835 757L1858 734Z" fill="#fff"/><text x="1608" y="542" font-size="27.500" font-weight="500" fill="#2a2a2a">妙法寺</text><path d="M2002 519L2028 545M2028 519L2002 545" stroke="#5e5e5e" stroke-width="4.200" fill="none"/><text font-size="25.500" fill="#2a2a2a"><tspan x="1608" y="608">日本</tspan><tspan x="1608" y="640">〒166-0013 東京都杉並区堀ノ</tspan><tspan x="1608" y="672">内３丁目４８−８</tspan><tspan x="1607" y="704" fill="#3871e0">Googleマップで見る</tspan></text><circle cx="2378" cy="846" r="40" fill="#fff" filter="url(#cs)"/><path d="M2368.600 832.700L2377.900 823.400L2387.200 832.700M2368.600 859.300L2377.900 868.600L2387.200 859.300M2365.500 836.700L2356.200 846L2365.500 855.300M2390.500 836.700L2399.800 846L2390.500 855.300" fill="none" stroke="#666" stroke-width="4.300"/><rect x="2338" y="950" width="80" height="162" rx="2" fill="#fff" filter="url(#cs)"/><rect x="2348" y="1030" width="60" height="1.600" fill="#e6e6e6"/><path d="M2362 990h32M2378 974v32M2362 1071.500h32" stroke="#666" stroke-width="3.600" fill="none"/></svg></div>
<div id="mapborder"></div>
<div class="t" id="help">地図上でクリックして住所を選択してください</div>
<div id="mf"></div>
<div class="btn" style="left:21.33rem;top:13.08rem;width:1.99rem;background:#6c757d">キャンセル</div>
<div class="btn" style="left:23.47rem;top:13.08rem;width:1.09rem;background:#316cf4">登録</div>
</div>
</body></html>
